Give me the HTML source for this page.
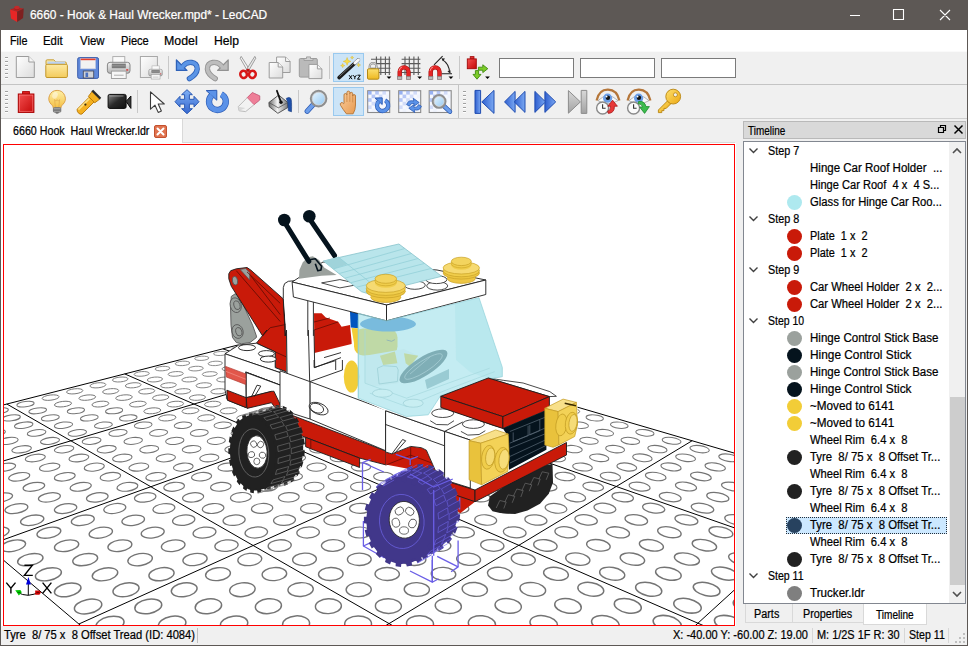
<!DOCTYPE html>
<html><head><meta charset="utf-8"><title>6660 - Hook &amp; Haul Wrecker.mpd* - LeoCAD</title>
<style>
html,body{margin:0;padding:0;background:#f0f0f0;overflow:hidden}
#win{position:relative;width:968px;height:646px;background:#f0f0f0;overflow:hidden;font:12px "Liberation Sans", sans-serif;}
.abs{position:absolute}
.t{position:absolute;white-space:pre;-webkit-text-stroke:0.22px currentColor;line-height:14px;height:14px;transform-origin:0 50%;font:12px/14px "Liberation Sans", sans-serif}
.dot{width:15px;height:15px;border-radius:50%}
.sel{background:#cce8ff;box-sizing:border-box;border:1px dotted #26303a}
.vline{position:absolute;width:1px;background:#c8c8c8}
.inp{position:absolute;box-sizing:border-box;background:#fff;border:1px solid #7a7a7a;top:58px;height:20px;width:75px}
.hl{position:absolute;box-sizing:border-box;background:#cce4f7;border:1px solid #99c9ef;width:31px;height:29px}
.grip{position:absolute;width:3px;height:24px;background:repeating-linear-gradient(#f0f0f0 0 1px,#a0a0a0 1px 2px,#fff 2px 3px,#f0f0f0 3px 4px)}
</style></head><body>
<div id="win">
<!-- title bar -->
<div class="abs" style="left:0;top:0;width:968px;height:30px;background:#5d5855"></div>
<!-- menu bar -->
<div class="abs" style="left:1px;top:30px;width:966px;height:21px;background:#fff"></div>
<!-- toolbars -->
<div class="abs" style="left:1px;top:51px;width:966px;height:1px;background:#fafafa"></div>
<div class="abs" style="left:1px;top:84px;width:966px;height:1px;background:#c4c4c4"></div>
<div class="abs" style="left:1px;top:118px;width:966px;height:1px;background:#d0d0d0"></div>
<div class="abs" style="left:458px;top:85px;width:1px;height:33px;background:#c4c4c4"></div>
<div class="grip" style="left:5px;top:56px"></div><div class="grip" style="left:5px;top:90px"></div><div class="grip" style="left:463px;top:90px"></div>
<div class="vline" style="left:168px;top:56px;height:23px"></div><div class="vline" style="left:329px;top:56px;height:23px"></div><div class="vline" style="left:459px;top:56px;height:23px"></div>
<div class="vline" style="left:137px;top:90px;height:23px"></div><div class="vline" style="left:298px;top:90px;height:23px"></div>
<div class="hl" style="left:333px;top:53px"></div><div class="hl" style="left:333px;top:87px"></div>
<div class="inp" style="left:499px"></div><div class="inp" style="left:580px"></div><div class="inp" style="left:661px"></div>
<svg class="abs" style="left:0;top:52px" width="968" height="66" viewBox="0 52 968 66"><defs>
<linearGradient id="gPage" x1="0" y1="0" x2="1" y2="1"><stop offset="0" stop-color="#ffffff"/><stop offset="1" stop-color="#dcdcdc"/></linearGradient>
<linearGradient id="gFold" x1="0" y1="0" x2="0" y2="1"><stop offset="0" stop-color="#fdeaa5"/><stop offset="1" stop-color="#f3cb5c"/></linearGradient>
<linearGradient id="gPrn" x1="0" y1="0" x2="0" y2="1"><stop offset="0" stop-color="#f2f2f2"/><stop offset="1" stop-color="#b4b4b4"/></linearGradient>
<linearGradient id="gBlue" x1="0" y1="0" x2="0" y2="1"><stop offset="0" stop-color="#7fb0f5"/><stop offset="1" stop-color="#3667cf"/></linearGradient>
<linearGradient id="gBlueH" x1="0" y1="0" x2="1" y2="0"><stop offset="0" stop-color="#2f5fd0"/><stop offset="1" stop-color="#7aa8f2"/></linearGradient>
<linearGradient id="gGray" x1="0" y1="0" x2="0" y2="1"><stop offset="0" stop-color="#d8d8d8"/><stop offset="1" stop-color="#a2a2a2"/></linearGradient>
<linearGradient id="gRed" x1="0" y1="0" x2="1" y2="1"><stop offset="0" stop-color="#f45050"/><stop offset="1" stop-color="#c40808"/></linearGradient>
<linearGradient id="gLock" x1="0" y1="0" x2="0" y2="1"><stop offset="0" stop-color="#fbe070"/><stop offset="1" stop-color="#eeb820"/></linearGradient>
<linearGradient id="gGlass" x1="0" y1="0" x2="1" y2="1"><stop offset="0" stop-color="#eef8ff"/><stop offset="1" stop-color="#8fc6f2"/></linearGradient>
<linearGradient id="gBucket" x1="0" y1="0" x2="1" y2="0"><stop offset="0" stop-color="#6a6a6a"/><stop offset="0.45" stop-color="#f4f4f4"/><stop offset="1" stop-color="#7a7a7a"/></linearGradient>
<linearGradient id="gCam" x1="0" y1="0" x2="1" y2="1"><stop offset="0" stop-color="#8a8a8a"/><stop offset="0.5" stop-color="#2a2a2a"/><stop offset="1" stop-color="#101010"/></linearGradient>
<linearGradient id="gBulb" x1="0" y1="0" x2="0" y2="1"><stop offset="0" stop-color="#fdf0a8"/><stop offset="1" stop-color="#f6c044"/></linearGradient>
<linearGradient id="gGold" x1="0" y1="0" x2="1" y2="1"><stop offset="0" stop-color="#fde070"/><stop offset="1" stop-color="#eda810"/></linearGradient>
<linearGradient id="gSkin" x1="0" y1="0" x2="1" y2="1"><stop offset="0" stop-color="#fbd0a0"/><stop offset="1" stop-color="#e89a50"/></linearGradient>
<linearGradient id="gChk" x1="0" y1="0" x2="1" y2="1"><stop offset="0" stop-color="#9db8f5"/><stop offset="1" stop-color="#e8eefc"/></linearGradient>
</defs>
<g transform="translate(13.3 55.0)"><path d="M3 1.5h12.5l5.5 5.5v15.5h-18z" stroke="#9c9c9c" stroke-width="1" fill="url(#gPage)"/><path d="M15.5 1.5v5.5h5.5" fill="#f6f6f6" stroke="#9c9c9c" stroke-width="1"/></g>
<g transform="translate(44.5 55.0)"><path d="M1.5 9.5V6q0-1.2 1.2-1.2h6.6l2 2.2h9.4q1.2 0 1.2 1.2v1.3z" fill="#f4e3a0" stroke="#c9a23c"/><rect x="3" y="6.6" width="17.5" height="3" fill="#bcd3f2"/><rect x="1.3" y="9.3" width="21.6" height="13.2" rx="1.2" fill="url(#gFold)" stroke="#c2962a"/></g>
<g transform="translate(76.1 55.0)"><rect x="1.6" y="2.6" width="20.8" height="20.8" rx="1.6" fill="#5f88da" stroke="#3c5fae"/><rect x="4.6" y="3.6" width="14.8" height="10.2" fill="#f2f2f2" stroke="#c8cde0" stroke-width=".6"/><rect x="4.6" y="3.6" width="14.8" height="1.6" fill="#e8402c"/><rect x="7.2" y="16" width="10.4" height="7" fill="#cfd2d8" stroke="#4a4f66" stroke-width=".9"/><rect x="9.4" y="17.6" width="2.6" height="4.4" fill="#4a70c0"/></g>
<g transform="translate(106.7 55.0)"><g transform="translate(0.1 1.1) scale(1.0)"><rect x="6" y="0.5" width="12" height="7" fill="#fafafa" stroke="#a8a8a8" stroke-width=".9"/><rect x="0.6" y="6.2" width="22.6" height="11" rx="2.6" fill="url(#gPrn)" stroke="#7c7c7c" stroke-width=".9"/><rect x="5" y="7.5" width="14" height="4.6" fill="#7a7a7a"/><rect x="5" y="9.2" width="14" height="1" fill="#999"/><rect x="19.4" y="13.2" width="2" height="1.3" fill="#e02020"/><rect x="4.6" y="15" width="14.8" height="7.4" fill="#f6f6f6" stroke="#9a9a9a" stroke-width=".9"/><rect x="7.2" y="18.6" width="9.6" height="1" fill="#b0b0b0"/></g></g>
<g transform="translate(139.2 55.0)"><rect x="1.2" y="1.5" width="17" height="21" fill="url(#gPage)" stroke="#a8a8a8"/><g transform="translate(9.2 10.6) scale(0.6)"><rect x="6" y="0.5" width="12" height="7" fill="#fafafa" stroke="#a8a8a8" stroke-width=".9"/><rect x="0.6" y="6.2" width="22.6" height="11" rx="2.6" fill="url(#gPrn)" stroke="#7c7c7c" stroke-width=".9"/><rect x="5" y="7.5" width="14" height="4.6" fill="#7a7a7a"/><rect x="5" y="9.2" width="14" height="1" fill="#999"/><rect x="19.4" y="13.2" width="2" height="1.3" fill="#e02020"/><rect x="4.6" y="15" width="14.8" height="7.4" fill="#f6f6f6" stroke="#9a9a9a" stroke-width=".9"/><rect x="7.2" y="18.6" width="9.6" height="1" fill="#b0b0b0"/></g></g>
<g transform="translate(175.2 56.0)"><g ><path d="M7.5 10.5C12 4.5 22.5 5 22 13C21.6 17.6 17 21 14.2 22.6" fill="none" stroke="#2f62b8" stroke-width="5.4" stroke-linecap="round"/><path d="M1.2 3.8V14.4H11.8z" fill="#2f62b8" stroke="#2f62b8" stroke-width="1.2" stroke-linejoin="round"/><path d="M7.5 10.5C12 4.5 22.5 5 22 13C21.6 17.6 17 21 14.2 22.6" fill="none" stroke="#5b95e6" stroke-width="3.6" stroke-linecap="round"/><path d="M1.9 5.6V13.7H10z" fill="#5b95e6"/></g></g>
<g transform="translate(205.4 56.0)"><g transform="translate(24 0) scale(-1 1)"><path d="M7.5 10.5C12 4.5 22.5 5 22 13C21.6 17.6 17 21 14.2 22.6" fill="none" stroke="#929292" stroke-width="5.4" stroke-linecap="round"/><path d="M1.2 3.8V14.4H11.8z" fill="#929292" stroke="#929292" stroke-width="1.2" stroke-linejoin="round"/><path d="M7.5 10.5C12 4.5 22.5 5 22 13C21.6 17.6 17 21 14.2 22.6" fill="none" stroke="#bdbdbd" stroke-width="3.6" stroke-linecap="round"/><path d="M1.9 5.6V13.7H10z" fill="#bdbdbd"/></g></g>
<g transform="translate(236.0 55.0)"><path d="M5.2 1.4L14.6 16.2L12.3 17.3L4.2 3.2z" fill="#f4f4f4" stroke="#8a8a8a" stroke-width=".8"/><path d="M18.8 1.4L9.4 16.2L11.7 17.3L19.8 3.2z" fill="#e8e8e8" stroke="#8a8a8a" stroke-width=".8"/><ellipse cx="7.6" cy="19.4" rx="3.3" ry="3.6" fill="none" stroke="#d81818" stroke-width="2.5" transform="rotate(-20 7.6 19.4)"/><ellipse cx="16.4" cy="19.4" rx="3.3" ry="3.6" fill="none" stroke="#d81818" stroke-width="2.5" transform="rotate(20 16.4 19.4)"/><path d="M9.8 15l2.2 -1.5l2.2 1.5l-2.2 2.2z" fill="#c01010"/></g>
<g transform="translate(267.6 55.0)"><path d="M9 2h9.0l4.5 4.5v11.0h-13.5z" stroke="#9c9c9c" stroke-width="1" fill="url(#gPage)"/><path d="M18.0 2v4.5h4.5" fill="#f6f6f6" stroke="#9c9c9c" stroke-width="1"/><path d="M1.6 7.5h9.0l4.5 4.5v11.0h-13.5z" stroke="#9c9c9c" stroke-width="1" fill="url(#gPage)"/><path d="M10.6 7.5v4.5h4.5" fill="#f6f6f6" stroke="#9c9c9c" stroke-width="1"/></g>
<g transform="translate(298.5 55.0)"><rect x="0.8" y="3.5" width="18" height="18.6" rx="1.2" fill="#bababa" stroke="#9c9c9c"/><path d="M5.5 5.5v-2h2.5v-1.6h4v1.6h2.5v2z" fill="#d0d0d0" stroke="#9c9c9c" stroke-width=".9"/><path d="M10.4 9.4h8.5l4.5 4.5v9.7h-13z" stroke="#9c9c9c" stroke-width="1" fill="url(#gPage)"/><path d="M18.9 9.4v4.5h4.5" fill="#f6f6f6" stroke="#9c9c9c" stroke-width="1"/></g>
<g transform="translate(336.5 55.0)"><path d="M2.6 22.6L21.8 5" stroke="#1a1a1a" stroke-width="3.6" stroke-linecap="round"/><path d="M3.2 21.2L20.4 5.4" stroke="#6a6a6a" stroke-width="1" stroke-linecap="round"/><path d="M18.6 7.9L21.9 4.9" stroke="#f8f8f8" stroke-width="3.2" stroke-linecap="round"/><path d="M10.6 2.5000000000000004L11.692 5.308L14.5 6.4L11.692 7.492000000000001L10.6 10.3L9.508 7.492000000000001L6.699999999999999 6.4L9.508 5.308z" fill="#f7dc4a" stroke="#d9b020" stroke-width=".4"/><path d="M6.2 8.5L6.788 10.012L8.3 10.6L6.788 11.187999999999999L6.2 12.7L5.612 11.187999999999999L4.1 10.6L5.612 10.012z" fill="#f7dc4a" stroke="#d9b020" stroke-width=".4"/><path d="M22.2 8.1L22.732 9.468L24.099999999999998 10L22.732 10.532L22.2 11.9L21.668 10.532L20.3 10L21.668 9.468z" fill="#f7dc4a" stroke="#d9b020" stroke-width=".4"/><path d="M15.6 1.0L16.048 2.152L17.2 2.6L16.048 3.048L15.6 4.2L15.152 3.048L14.0 2.6L15.152 2.152z" fill="#f7dc4a" stroke="#d9b020" stroke-width=".4"/><path d="M12.6 20.2l3 4m0-4l-3 4M16.7 20.2l1.6 2l1.6-2m-1.6 2v2M21 20.2h2.8l-2.8 4h2.8" fill="none" stroke="#000" stroke-width="1"/></g>
<g transform="translate(367.0 55.0)"><path d="M9.4 1.6V20M13.8 1.6V20M18.4 1.6V20M22.3 1.6V20M4 4.2H23.4M4 8.6H23.4M4 13.2H23.4M4 17.5H23.4" stroke="#5a5a5a" stroke-width="1.1" fill="none"/><path d="M2.7 14.2V11.4a3.4 3.4 0 0 1 6.8 0V14.2" fill="none" stroke="#8a8a8a" stroke-width="2.2"/><path d="M2.7 14.2V11.4a3.4 3.4 0 0 1 6.8 0V14.2" fill="none" stroke="#e6e6e6" stroke-width=".8"/><rect x="0.5" y="13.8" width="11.4" height="10.4" rx="1.2" fill="url(#gLock)" stroke="#b48a14"/><path d="M19.6 21.4h4.8l-2.4 2.7z" fill="#000"/></g>
<g transform="translate(398.0 55.0)"><path d="M7 1.6V20M11.3 1.6V20M15.9 1.6V20M20.3 1.6V20M3.6 4.2H22.4M3.6 8.6H22.4M3.6 13.2H22.4M3.6 17.5H22.4" stroke="#5a5a5a" stroke-width="1.1" fill="none"/><path d="M1.7 24.2V16.8a4.4 4.4 0 0 1 8.8 0V24.2" fill="none" stroke="#a01010" stroke-width="4.4"/><path d="M1.7 24.2V16.8a4.4 4.4 0 0 1 8.8 0V24.2" fill="none" stroke="#e42424" stroke-width="3.2"/><path d="M1.1 15.8a5 5 0 0 1 3 -4" fill="none" stroke="#f9a0a0" stroke-width="1"/><rect x="-0.5" y="21.4" width="4.4" height="3" fill="#b8b8b8" stroke="#808080" stroke-width=".6"/><rect x="8.3" y="21.4" width="4.4" height="3" fill="#b8b8b8" stroke="#808080" stroke-width=".6"/><path d="M19.3 21.4h4.8l-2.4 2.7z" fill="#000"/></g>
<g transform="translate(429.0 55.0)"><path d="M5 9.8L13.6 1.2M12.6 18.8H23" stroke="#222" stroke-width="1.1" fill="none"/><path d="M13.4 4.6A15 15 0 0 1 20.4 17.6" stroke="#222" stroke-width="1.1" fill="none"/><path d="M12.4 3.2l3.6 .4l-2 2.6zM21.6 18.6l-3.2-2l3-1.4z" fill="#222"/><path d="M1.7 24.2V16.8a4.4 4.4 0 0 1 8.8 0V24.2" fill="none" stroke="#a01010" stroke-width="4.4"/><path d="M1.7 24.2V16.8a4.4 4.4 0 0 1 8.8 0V24.2" fill="none" stroke="#e42424" stroke-width="3.2"/><path d="M1.1 15.8a5 5 0 0 1 3 -4" fill="none" stroke="#f9a0a0" stroke-width="1"/><rect x="-0.5" y="21.4" width="4.4" height="3" fill="#b8b8b8" stroke="#808080" stroke-width=".6"/><rect x="8.3" y="21.4" width="4.4" height="3" fill="#b8b8b8" stroke="#808080" stroke-width=".6"/><path d="M19.5 21.4h4.8l-2.4 2.7z" fill="#000"/></g>
<g transform="translate(466.0 55.0)"><rect x="4.2" y="1.6" width="3.8" height="2.6" fill="#e03030" stroke="#a00808" stroke-width=".8"/><rect x="1.3" y="3.9" width="9" height="9.8" fill="url(#gRed)" stroke="#a00808" stroke-width=".9"/><path d="M12.4 12.2h4.4v-2.4l5 3.9l-5 3.9v-2.4h-4.4z" fill="#7ccc28" stroke="#3f8a10" stroke-width=".9" stroke-linejoin="round"/><path d="M9.4 15.6h3.2v3.8h2.4l-4 4.8l-4-4.8h2.4z" fill="#7ccc28" stroke="#3f8a10" stroke-width=".9" stroke-linejoin="round"/><path d="M19.1 21.4h4.8l-2.4 2.7z" fill="#000"/></g>
<g transform="translate(14.0 90.0)"><rect x="8.6" y="1.6" width="6.8" height="2.8" fill="#e02020" stroke="#a80000" stroke-width=".9"/><rect x="4.3" y="4" width="15.6" height="18.4" fill="url(#gRed)" stroke="#a80000" stroke-width="1"/><rect x="5.4" y="5.1" width="13.4" height="16.2" fill="none" stroke="#ff8a8a" stroke-width=".7" stroke-opacity=".8"/></g>
<g transform="translate(45.0 90.0)"><path d="M12.1 0.4a8.2 8.2 0 0 1 5.6 14.2c-1.2 1.2-1.6 2-1.6 3.2h-8c0-1.2-.4-2-1.6-3.2A8.2 8.2 0 0 1 12.1 0.4z" fill="url(#gBulb)" stroke="#d99a3c" stroke-width=".9"/><path d="M10.4 17.2L9.6 9.6l1.3 1.6l1.2-1.6l1.2 1.6l1.3-1.6L13.8 17.2" fill="none" stroke="#e2aa4a" stroke-width=".7"/><ellipse cx="10" cy="5.4" rx="2.6" ry="3.4" fill="#fff" fill-opacity=".45" transform="rotate(25 10 5.4)"/><rect x="8.4" y="17.6" width="7.4" height="4.6" rx="1" fill="#b9b9b9" stroke="#6c6c6c" stroke-width=".8"/><path d="M8.6 19.2h7M8.6 20.7h7" stroke="#5a5a5a" stroke-width=".8"/><path d="M10.2 22.4h3.8l-.8 1.2h-2.2z" fill="#444"/></g>
<g transform="translate(76.0 90.0)"><path d="M1.2 19.2L13.2 7.2L18 12L6 24q-1.6 .8-3.4-.8q-2-2-1.4-4z" fill="#f4b020" stroke="#b87808" stroke-width=".9"/><path d="M2.4 19.6L13.4 8.6" stroke="#fde080" stroke-width="1.6"/><path d="M12.4 6.4L16 1.6L23.6 9.2L18.8 12.8z" fill="#f4b020" stroke="#b87808" stroke-width=".9"/><path d="M15.4 1.2l1.8-1.4l8 8l-1.4 1.8z" fill="#2a2a2a"/><circle cx="9.4" cy="14.6" r="1.1" fill="#3a2a08"/></g>
<g transform="translate(107.5 90.0)"><rect x="0.6" y="4.4" width="18" height="14" rx="1.6" fill="url(#gCam)" stroke="#0a0a0a" stroke-width="1"/><path d="M18.6 11.4L23.4 6v12.4z" fill="#3a3a3a" stroke="#0a0a0a" stroke-width="1" stroke-linejoin="round"/><path d="M2 6h14" stroke="#bdbdbd" stroke-width="1" stroke-opacity=".6"/></g>
<g transform="translate(145.0 90.0)"><path d="M5.5 1.8V19.2L10 15.2L13.2 22.4L16.4 21L13.2 14H19.3z" fill="#fff" stroke="#3c3c3c" stroke-width="1.1" stroke-linejoin="round"/></g>
<g transform="translate(175.0 89.7)"><path d="M12 0l5.4 5h-3v4.6h4.6v-3l5 5.4l-5 5.4v-3h-4.6v4.6h3l-5.4 5l-5.4-5h3v-4.6h-4.6v3l-5-5.4l5-5.4v3h4.6v-4.6h-3z" fill="url(#gBlue)" stroke="#2b5ab4" stroke-width="1" stroke-linejoin="round"/></g>
<g transform="translate(205.0 90.0)"><path d="M16.34 4.18A8.4 8.4 0 1 1 6.78 5.36" fill="none" stroke="#2b5ab4" stroke-width="6.3"/><path d="M1.20 0.60L11.80 0.30L11.80 10.20z" fill="#5b92e8" stroke="#2b5ab4" stroke-width="1" stroke-linejoin="round"/><path d="M16.34 4.18A8.4 8.4 0 1 1 6.78 5.36" fill="none" stroke="#5b92e8" stroke-width="5.0"/></g>
<g transform="translate(237.0 90.0)"><path d="M1.2 16.7L15.3 2.6L22.7 5.9V10L8.7 21.6L2.1 20.8z" fill="#f2f2f2" stroke="#b4b4b4" stroke-width=".9" stroke-linejoin="round"/><path d="M10.3 7.6L15.3 2.6L22.7 5.9V10L17 14.6z" fill="#ee7f98" stroke="#d05878" stroke-width=".8" stroke-linejoin="round"/><path d="M2.1 20.8L1.2 16.7L8.4 18z" fill="#d8d8d8"/></g>
<g transform="translate(268.3 90.0)"><path d="M0.6 12.5L10.4 5.1L19.5 12.5V17.5L9.6 23.3L0.9 16.7z" fill="url(#gBucket)" stroke="#4a4a4a" stroke-width=".9" stroke-linejoin="round"/><path d="M0.6 12.5L10 17.8L19.5 12.5" fill="none" stroke="#555" stroke-width=".8"/><path d="M17.9 8.4Q21 6.4 22.6 8.4Q23.6 10 23.2 21.8L20 20.8L19.5 12.5z" fill="#1f4fa8" stroke="#163a80" stroke-width=".6"/><path d="M8.6 0.8L12.6 12" stroke="#111" stroke-width="1.8" stroke-linecap="round"/><circle cx="12.7" cy="12.2" r="1.7" fill="#111"/></g>
<g transform="translate(305.0 90.0)"><path d="M8.5 14.2L2.2 21.2" stroke="#2b5ab4" stroke-width="5.199999999999999" stroke-linecap="round"/><path d="M8.5 14.2L2.2 21.2" stroke="#6d9eea" stroke-width="3.8" stroke-linecap="round"/><circle cx="13.6" cy="8.6" r="7.6" fill="url(#gGlass)" stroke="#8e8e8e" stroke-width="2.4"/><circle cx="13.6" cy="8.6" r="6.3999999999999995" fill="none" stroke="#d8d8d8" stroke-width=".8"/></g>
<g transform="translate(337.0 90.0)"><path d="M7 13.4V5q0-1.5 1.45-1.5T9.9 5V2.6q0-1.5 1.45-1.5t1.45 1.5V3.8q0-1.5 1.45-1.5t1.45 1.5V6q0-1.4 1.4-1.4t1.4 1.4V15q0 5-2.4 8.8H9.4Q6 19.4 3.6 15.4q-1-1.8.4-2.6t2.6.8z" fill="url(#gSkin)" stroke="#b47434" stroke-width=".9" stroke-linejoin="round"/><path d="M9.9 5v7M12.8 3.8v8M15.7 6v6.4" stroke="#c98848" stroke-width=".8"/></g>
<g transform="translate(367.0 90.0)"><rect x="0.7" y="0.7" width="22" height="21.8" fill="#f6f8fe" stroke="#8a8a8a" stroke-width="1.1"/><rect x="1.0" y="1.0" width="3.6" height="3.6" fill="#8ea8f0" fill-opacity="0.90"/><rect x="1.0" y="8.2" width="3.6" height="3.6" fill="#8ea8f0" fill-opacity="0.62"/><rect x="1.0" y="15.4" width="3.6" height="3.6" fill="#8ea8f0" fill-opacity="0.34"/><rect x="4.6" y="4.6" width="3.6" height="3.6" fill="#8ea8f0" fill-opacity="0.62"/><rect x="4.6" y="11.8" width="3.6" height="3.6" fill="#8ea8f0" fill-opacity="0.34"/><rect x="4.6" y="19.0" width="3.6" height="3.6" fill="#8ea8f0" fill-opacity="0.06"/><rect x="8.2" y="1.0" width="3.6" height="3.6" fill="#8ea8f0" fill-opacity="0.62"/><rect x="8.2" y="8.2" width="3.6" height="3.6" fill="#8ea8f0" fill-opacity="0.34"/><rect x="8.2" y="15.4" width="3.6" height="3.6" fill="#8ea8f0" fill-opacity="0.06"/><rect x="11.8" y="4.6" width="3.6" height="3.6" fill="#8ea8f0" fill-opacity="0.34"/><rect x="11.8" y="11.8" width="3.6" height="3.6" fill="#8ea8f0" fill-opacity="0.06"/><rect x="11.8" y="19.0" width="3.6" height="3.6" fill="#8ea8f0" fill-opacity="0.00"/><rect x="15.4" y="1.0" width="3.6" height="3.6" fill="#8ea8f0" fill-opacity="0.34"/><rect x="15.4" y="8.2" width="3.6" height="3.6" fill="#8ea8f0" fill-opacity="0.06"/><rect x="15.4" y="15.4" width="3.6" height="3.6" fill="#8ea8f0" fill-opacity="0.00"/><rect x="19.0" y="4.6" width="3.6" height="3.6" fill="#8ea8f0" fill-opacity="0.06"/><rect x="19.0" y="11.8" width="3.6" height="3.6" fill="#8ea8f0" fill-opacity="0.00"/><rect x="19.0" y="19.0" width="3.6" height="3.6" fill="#8ea8f0" fill-opacity="0.00"/><path d="M18.23 10.46A5.6 5.6 0 1 1 11.85 11.24" fill="none" stroke="#2b5ab4" stroke-width="4.3"/><path d="M8.13 8.07L15.20 7.87L15.20 14.47z" fill="#5b92e8" stroke="#2b5ab4" stroke-width="1" stroke-linejoin="round"/><path d="M18.23 10.46A5.6 5.6 0 1 1 11.85 11.24" fill="none" stroke="#5b92e8" stroke-width="3.0"/></g>
<g transform="translate(398.0 90.0)"><rect x="0.7" y="0.7" width="22" height="21.8" fill="#f6f8fe" stroke="#8a8a8a" stroke-width="1.1"/><rect x="1.0" y="1.0" width="3.6" height="3.6" fill="#8ea8f0" fill-opacity="0.90"/><rect x="1.0" y="8.2" width="3.6" height="3.6" fill="#8ea8f0" fill-opacity="0.62"/><rect x="1.0" y="15.4" width="3.6" height="3.6" fill="#8ea8f0" fill-opacity="0.34"/><rect x="4.6" y="4.6" width="3.6" height="3.6" fill="#8ea8f0" fill-opacity="0.62"/><rect x="4.6" y="11.8" width="3.6" height="3.6" fill="#8ea8f0" fill-opacity="0.34"/><rect x="4.6" y="19.0" width="3.6" height="3.6" fill="#8ea8f0" fill-opacity="0.06"/><rect x="8.2" y="1.0" width="3.6" height="3.6" fill="#8ea8f0" fill-opacity="0.62"/><rect x="8.2" y="8.2" width="3.6" height="3.6" fill="#8ea8f0" fill-opacity="0.34"/><rect x="8.2" y="15.4" width="3.6" height="3.6" fill="#8ea8f0" fill-opacity="0.06"/><rect x="11.8" y="4.6" width="3.6" height="3.6" fill="#8ea8f0" fill-opacity="0.34"/><rect x="11.8" y="11.8" width="3.6" height="3.6" fill="#8ea8f0" fill-opacity="0.06"/><rect x="11.8" y="19.0" width="3.6" height="3.6" fill="#8ea8f0" fill-opacity="0.00"/><rect x="15.4" y="1.0" width="3.6" height="3.6" fill="#8ea8f0" fill-opacity="0.34"/><rect x="15.4" y="8.2" width="3.6" height="3.6" fill="#8ea8f0" fill-opacity="0.06"/><rect x="15.4" y="15.4" width="3.6" height="3.6" fill="#8ea8f0" fill-opacity="0.00"/><rect x="19.0" y="4.6" width="3.6" height="3.6" fill="#8ea8f0" fill-opacity="0.06"/><rect x="19.0" y="11.8" width="3.6" height="3.6" fill="#8ea8f0" fill-opacity="0.00"/><rect x="19.0" y="19.0" width="3.6" height="3.6" fill="#8ea8f0" fill-opacity="0.00"/><path d="M8.6 14.6q1.6-5 7.2-3.6l-.6-2.8l6 4.4l-5 3.4l-.2-2.6q-3.4-.6-4.6 2.8z" fill="#5b92e8" stroke="#2b5ab4" stroke-width=".8" stroke-linejoin="round"/><path d="M23.4 16.2q-1.6 5-7.2 3.6l.6 2.8l-6-4.4l5-3.4l.2 2.6q3.4.6 4.6-2.8z" fill="#5b92e8" stroke="#2b5ab4" stroke-width=".8" stroke-linejoin="round"/></g>
<g transform="translate(428.5 90.0)"><rect x="0.7" y="0.7" width="22" height="21.8" fill="#f6f8fe" stroke="#8a8a8a" stroke-width="1.1"/><rect x="1.0" y="1.0" width="3.6" height="3.6" fill="#8ea8f0" fill-opacity="0.90"/><rect x="1.0" y="8.2" width="3.6" height="3.6" fill="#8ea8f0" fill-opacity="0.62"/><rect x="1.0" y="15.4" width="3.6" height="3.6" fill="#8ea8f0" fill-opacity="0.34"/><rect x="4.6" y="4.6" width="3.6" height="3.6" fill="#8ea8f0" fill-opacity="0.62"/><rect x="4.6" y="11.8" width="3.6" height="3.6" fill="#8ea8f0" fill-opacity="0.34"/><rect x="4.6" y="19.0" width="3.6" height="3.6" fill="#8ea8f0" fill-opacity="0.06"/><rect x="8.2" y="1.0" width="3.6" height="3.6" fill="#8ea8f0" fill-opacity="0.62"/><rect x="8.2" y="8.2" width="3.6" height="3.6" fill="#8ea8f0" fill-opacity="0.34"/><rect x="8.2" y="15.4" width="3.6" height="3.6" fill="#8ea8f0" fill-opacity="0.06"/><rect x="11.8" y="4.6" width="3.6" height="3.6" fill="#8ea8f0" fill-opacity="0.34"/><rect x="11.8" y="11.8" width="3.6" height="3.6" fill="#8ea8f0" fill-opacity="0.06"/><rect x="11.8" y="19.0" width="3.6" height="3.6" fill="#8ea8f0" fill-opacity="0.00"/><rect x="15.4" y="1.0" width="3.6" height="3.6" fill="#8ea8f0" fill-opacity="0.34"/><rect x="15.4" y="8.2" width="3.6" height="3.6" fill="#8ea8f0" fill-opacity="0.06"/><rect x="15.4" y="15.4" width="3.6" height="3.6" fill="#8ea8f0" fill-opacity="0.00"/><rect x="19.0" y="4.6" width="3.6" height="3.6" fill="#8ea8f0" fill-opacity="0.06"/><rect x="19.0" y="11.8" width="3.6" height="3.6" fill="#8ea8f0" fill-opacity="0.00"/><rect x="19.0" y="19.0" width="3.6" height="3.6" fill="#8ea8f0" fill-opacity="0.00"/><path d="M15.1 15.7L21.4 21.6" stroke="#2b5ab4" stroke-width="4.6" stroke-linecap="round"/><path d="M15.1 15.7L21.4 21.6" stroke="#6d9eea" stroke-width="3.2" stroke-linecap="round"/><circle cx="10.6" cy="11.4" r="6.2" fill="url(#gGlass)" stroke="#8e8e8e" stroke-width="2.4"/><circle cx="10.6" cy="11.4" r="5.0" fill="none" stroke="#d8d8d8" stroke-width=".8"/></g>
<g transform="translate(472.6 90.0)"><rect x="2.4" y="0.4" width="5.6" height="23" fill="url(#gBlueH)" stroke="#1f4cb0" stroke-width="1" stroke-linejoin="round"/><path d="M21.4 0.4v23L9.2 11.9z" fill="url(#gBlueH)" stroke="#1f4cb0" stroke-width="1" stroke-linejoin="round"/></g>
<g transform="translate(502.7 90.0)"><path d="M12.4 1.4v21L1.8 11.9z" fill="url(#gBlueH)" stroke="#1f4cb0" stroke-width="1" stroke-linejoin="round"/><path d="M22.3 1.4v21L11.6 11.9z" fill="url(#gBlueH)" stroke="#1f4cb0" stroke-width="1" stroke-linejoin="round"/></g>
<g transform="translate(533.5 90.0)"><path d="M11.4 1.4v21L22.2 11.9z" fill="url(#gBlueH)" stroke="#1f4cb0" stroke-width="1" stroke-linejoin="round"/><path d="M1.4 1.4v21L12 11.9z" fill="url(#gBlueH)" stroke="#1f4cb0" stroke-width="1" stroke-linejoin="round"/></g>
<g transform="translate(565.0 90.0)"><path d="M3.4 0.6v22.6L15.4 11.9z" fill="url(#gGray)" stroke="#8c8c8c" stroke-width="1" stroke-linejoin="round"/><rect x="16.2" y="0.4" width="5.6" height="23" fill="url(#gGray)" stroke="#8c8c8c" stroke-width="1" stroke-linejoin="round"/></g>
<g transform="translate(596.0 90.0)"><path d="M0.6 10.4Q3 -0.6 12 -0.4T23.4 10.4" fill="none" stroke="#b5763a" stroke-width="2.2"/><path d="M2 10.6Q11.8 1 22 10.6Q11.8 17 2 10.6z" fill="#fafafa" stroke="#9a9a9a" stroke-width=".7"/><circle cx="11.6" cy="8.2" r="4.6" fill="#6c9ee6"/><circle cx="11.9" cy="7.8" r="2.2" fill="#111"/><circle cx="10.6" cy="6.6" r=".9" fill="#fff"/><circle cx="6.6" cy="18" r="6" fill="#fbfbfb" stroke="#8a8a8a" stroke-width="1.4"/><path d="M6.6 14.2V18.2H9.6" fill="none" stroke="#333" stroke-width="1.1"/><path d="M12.4 23.4Q18.6 23 18.4 16.2H21.4L16.6 10.2L11.8 16.2H14.6Q14.8 20.6 11.6 21.4z" fill="#e83838" stroke="#a81414" stroke-width=".8" stroke-linejoin="round"/></g>
<g transform="translate(627.0 90.0)"><path d="M0.6 10.4Q3 -0.6 12 -0.4T23.4 10.4" fill="none" stroke="#b5763a" stroke-width="2.2"/><path d="M2 10.6Q11.8 1 22 10.6Q11.8 17 2 10.6z" fill="#fafafa" stroke="#9a9a9a" stroke-width=".7"/><circle cx="11.6" cy="8.2" r="4.6" fill="#6c9ee6"/><circle cx="11.9" cy="7.8" r="2.2" fill="#111"/><circle cx="10.6" cy="6.6" r=".9" fill="#fff"/><circle cx="6.6" cy="18" r="6" fill="#fbfbfb" stroke="#8a8a8a" stroke-width="1.4"/><path d="M6.6 14.2V18.2H9.6" fill="none" stroke="#333" stroke-width="1.1"/><path d="M11.6 11.4Q17.6 10.6 19 16.6H22.4L17.6 23.4L12.6 17H15.6Q14.8 13.6 11.2 13.8z" fill="#3cbc4c" stroke="#1c8a2c" stroke-width=".8" stroke-linejoin="round"/></g>
<g transform="translate(657.6 90.0)"><path d="M11.2 9.6L0.8 20v2.6h3.4v-2h2.2v-2.2h2.2l5-5z" fill="url(#gGold)" stroke="#b88410" stroke-width=".9" stroke-linejoin="round"/><circle cx="15.6" cy="6.6" r="7.4" fill="url(#gGold)" stroke="#b88410" stroke-width=".9"/><circle cx="17.8" cy="4.8" r="2" fill="#f0f0f0" stroke="#b88410" stroke-width=".8"/></g></svg>
<!-- central tab + viewport -->
<div class="abs" style="left:1px;top:119px;width:181px;height:25px;background:#fff"></div>
<div class="abs" style="left:182px;top:119px;width:553px;height:24px;background:#f0f0f0;border-left:1px solid #d9d9d9;border-bottom:1px solid #d9d9d9;box-sizing:border-box"></div>
<div class="abs" style="left:1px;top:143px;width:735px;height:483px;background:#fff"></div>
<div class="abs" style="left:154px;top:125px;width:13px;height:13px;box-sizing:border-box;background:#e0734f;border:1px solid #c3512f;border-radius:2px"></div>
<svg class="abs" style="left:154px;top:125px" width="13" height="13" viewBox="0 0 13 13"><path d="M3.5 3.5L9.5 9.5M9.5 3.5L3.5 9.5" stroke="#fff" stroke-width="2" stroke-linecap="round"/></svg>
<svg class="abs" style="left:4px;top:145px" width="730" height="480" viewBox="4 145 730 480">
<g fill="#fff" stroke="#747474"><ellipse cx="-18.3" cy="520.4" rx="12.1" ry="4.8" stroke-width="1.34" transform="rotate(-11.3 -18.3 520.4)"/><ellipse cx="-3.0" cy="532.7" rx="12.3" ry="5.1" stroke-width="1.37" transform="rotate(-11.5 -3.0 532.7)"/><ellipse cx="13.2" cy="545.8" rx="12.6" ry="5.4" stroke-width="1.40" transform="rotate(-11.6 13.2 545.8)"/><ellipse cx="30.3" cy="559.7" rx="12.9" ry="5.7" stroke-width="1.43" transform="rotate(-11.8 30.3 559.7)"/><ellipse cx="48.4" cy="574.3" rx="13.2" ry="6.1" stroke-width="1.46" transform="rotate(-11.9 48.4 574.3)"/><ellipse cx="67.7" cy="589.9" rx="13.5" ry="6.5" stroke-width="1.50" transform="rotate(-12.0 67.7 589.9)"/><ellipse cx="88.1" cy="606.5" rx="13.9" ry="7.0" stroke-width="1.53" transform="rotate(-12.0 88.1 606.5)"/><ellipse cx="110.0" cy="624.1" rx="14.2" ry="7.5" stroke-width="1.57" transform="rotate(-12.0 110.0 624.1)"/><ellipse cx="133.3" cy="642.9" rx="14.6" ry="8.1" stroke-width="1.60" transform="rotate(-11.9 133.3 642.9)"/><ellipse cx="-12.9" cy="486.9" rx="11.1" ry="4.1" stroke-width="1.23" transform="rotate(-10.2 -12.9 486.9)"/><ellipse cx="1.4" cy="497.5" rx="11.3" ry="4.3" stroke-width="1.26" transform="rotate(-10.3 1.4 497.5)"/><ellipse cx="16.4" cy="508.6" rx="11.6" ry="4.6" stroke-width="1.28" transform="rotate(-10.3 16.4 508.6)"/><ellipse cx="32.2" cy="520.3" rx="11.8" ry="4.9" stroke-width="1.31" transform="rotate(-10.4 32.2 520.3)"/><ellipse cx="48.9" cy="532.7" rx="12.1" ry="5.2" stroke-width="1.34" transform="rotate(-10.5 48.9 532.7)"/><ellipse cx="66.6" cy="545.8" rx="12.3" ry="5.5" stroke-width="1.37" transform="rotate(-10.5 66.6 545.8)"/><ellipse cx="85.2" cy="559.6" rx="12.6" ry="5.8" stroke-width="1.40" transform="rotate(-10.5 85.2 559.6)"/><ellipse cx="105.0" cy="574.3" rx="12.9" ry="6.2" stroke-width="1.43" transform="rotate(-10.4 105.0 574.3)"/><ellipse cx="126.0" cy="589.8" rx="13.2" ry="6.7" stroke-width="1.46" transform="rotate(-10.3 126.0 589.8)"/><ellipse cx="148.3" cy="606.4" rx="13.6" ry="7.1" stroke-width="1.50" transform="rotate(-10.1 148.3 606.4)"/><ellipse cx="172.1" cy="624.0" rx="13.9" ry="7.7" stroke-width="1.54" transform="rotate(-9.8 172.1 624.0)"/><ellipse cx="197.5" cy="642.9" rx="14.3" ry="8.3" stroke-width="1.58" transform="rotate(-9.3 197.5 642.9)"/><ellipse cx="-8.2" cy="458.0" rx="10.3" ry="3.6" stroke-width="1.14" transform="rotate(-9.2 -8.2 458.0)"/><ellipse cx="5.2" cy="467.2" rx="10.5" ry="3.8" stroke-width="1.16" transform="rotate(-9.3 5.2 467.2)"/><ellipse cx="19.2" cy="476.8" rx="10.7" ry="4.0" stroke-width="1.18" transform="rotate(-9.3 19.2 476.8)"/><ellipse cx="33.9" cy="486.8" rx="10.9" ry="4.2" stroke-width="1.21" transform="rotate(-9.3 33.9 486.8)"/><ellipse cx="49.4" cy="497.4" rx="11.1" ry="4.4" stroke-width="1.23" transform="rotate(-9.4 49.4 497.4)"/><ellipse cx="65.6" cy="508.6" rx="11.3" ry="4.7" stroke-width="1.26" transform="rotate(-9.3 65.6 508.6)"/><ellipse cx="82.8" cy="520.3" rx="11.6" ry="5.0" stroke-width="1.28" transform="rotate(-9.3 82.8 520.3)"/><ellipse cx="100.8" cy="532.7" rx="11.8" ry="5.3" stroke-width="1.31" transform="rotate(-9.2 100.8 532.7)"/><ellipse cx="119.9" cy="545.7" rx="12.1" ry="5.6" stroke-width="1.34" transform="rotate(-9.1 119.9 545.7)"/><ellipse cx="140.1" cy="559.6" rx="12.4" ry="6.0" stroke-width="1.37" transform="rotate(-8.9 140.1 559.6)"/><ellipse cx="161.5" cy="574.2" rx="12.7" ry="6.4" stroke-width="1.40" transform="rotate(-8.6 161.5 574.2)"/><ellipse cx="184.2" cy="589.8" rx="13.0" ry="6.8" stroke-width="1.44" transform="rotate(-8.3 184.2 589.8)"/><ellipse cx="208.4" cy="606.3" rx="13.3" ry="7.3" stroke-width="1.47" transform="rotate(-7.8 208.4 606.3)"/><ellipse cx="234.1" cy="623.9" rx="13.7" ry="7.8" stroke-width="1.51" transform="rotate(-7.1 234.1 623.9)"/><ellipse cx="261.6" cy="642.8" rx="14.1" ry="8.4" stroke-width="1.56" transform="rotate(-6.2 261.6 642.8)"/><ellipse cx="-16.2" cy="425.2" rx="9.4" ry="3.0" stroke-width="1.05" transform="rotate(-8.3 -16.2 425.2)"/><ellipse cx="-4.2" cy="432.9" rx="9.6" ry="3.1" stroke-width="1.06" transform="rotate(-8.4 -4.2 432.9)"/><ellipse cx="8.4" cy="440.9" rx="9.8" ry="3.3" stroke-width="1.08" transform="rotate(-8.4 8.4 440.9)"/><ellipse cx="21.6" cy="449.3" rx="9.9" ry="3.4" stroke-width="1.10" transform="rotate(-8.5 21.6 449.3)"/><ellipse cx="35.3" cy="458.0" rx="10.1" ry="3.6" stroke-width="1.12" transform="rotate(-8.5 35.3 458.0)"/><ellipse cx="49.7" cy="467.2" rx="10.3" ry="3.8" stroke-width="1.14" transform="rotate(-8.5 49.7 467.2)"/><ellipse cx="64.8" cy="476.8" rx="10.5" ry="4.0" stroke-width="1.16" transform="rotate(-8.4 64.8 476.8)"/><ellipse cx="80.7" cy="486.8" rx="10.7" ry="4.2" stroke-width="1.19" transform="rotate(-8.4 80.7 486.8)"/><ellipse cx="97.3" cy="497.4" rx="10.9" ry="4.5" stroke-width="1.21" transform="rotate(-8.3 97.3 497.4)"/><ellipse cx="114.8" cy="508.5" rx="11.1" ry="4.8" stroke-width="1.23" transform="rotate(-8.2 114.8 508.5)"/><ellipse cx="133.2" cy="520.3" rx="11.4" ry="5.0" stroke-width="1.26" transform="rotate(-8.0 133.2 520.3)"/><ellipse cx="152.7" cy="532.6" rx="11.6" ry="5.3" stroke-width="1.29" transform="rotate(-7.8 152.7 532.6)"/><ellipse cx="173.2" cy="545.7" rx="11.9" ry="5.7" stroke-width="1.32" transform="rotate(-7.5 173.2 545.7)"/><ellipse cx="195.0" cy="559.5" rx="12.2" ry="6.0" stroke-width="1.35" transform="rotate(-7.1 195.0 559.5)"/><ellipse cx="218.0" cy="574.1" rx="12.5" ry="6.4" stroke-width="1.38" transform="rotate(-6.6 218.0 574.1)"/><ellipse cx="242.4" cy="589.7" rx="12.8" ry="6.9" stroke-width="1.42" transform="rotate(-5.9 242.4 589.7)"/><ellipse cx="268.4" cy="606.2" rx="13.1" ry="7.4" stroke-width="1.46" transform="rotate(-5.1 268.4 606.2)"/><ellipse cx="296.1" cy="623.8" rx="13.5" ry="7.9" stroke-width="1.50" transform="rotate(-4.0 296.1 623.8)"/><ellipse cx="325.7" cy="642.7" rx="13.9" ry="8.4" stroke-width="1.54" transform="rotate(-2.6 325.7 642.7)"/><ellipse cx="-0.6" cy="410.8" rx="9.0" ry="2.8" stroke-width="1.00" transform="rotate(-7.7 -0.6 410.8)"/><ellipse cx="11.3" cy="417.9" rx="9.1" ry="2.9" stroke-width="1.01" transform="rotate(-7.7 11.3 417.9)"/><ellipse cx="23.7" cy="425.2" rx="9.3" ry="3.0" stroke-width="1.03" transform="rotate(-7.8 23.7 425.2)"/><ellipse cx="36.6" cy="432.9" rx="9.4" ry="3.2" stroke-width="1.05" transform="rotate(-7.8 36.6 432.9)"/><ellipse cx="50.0" cy="440.9" rx="9.6" ry="3.3" stroke-width="1.06" transform="rotate(-7.7 50.0 440.9)"/><ellipse cx="64.1" cy="449.2" rx="9.8" ry="3.5" stroke-width="1.08" transform="rotate(-7.7 64.1 449.2)"/><ellipse cx="78.9" cy="458.0" rx="10.0" ry="3.7" stroke-width="1.10" transform="rotate(-7.7 78.9 458.0)"/><ellipse cx="94.3" cy="467.1" rx="10.1" ry="3.9" stroke-width="1.12" transform="rotate(-7.6 94.3 467.1)"/><ellipse cx="110.4" cy="476.7" rx="10.3" ry="4.1" stroke-width="1.14" transform="rotate(-7.5 110.4 476.7)"/><ellipse cx="127.4" cy="486.8" rx="10.5" ry="4.3" stroke-width="1.17" transform="rotate(-7.3 127.4 486.8)"/><ellipse cx="145.2" cy="497.4" rx="10.8" ry="4.6" stroke-width="1.19" transform="rotate(-7.1 145.2 497.4)"/><ellipse cx="163.9" cy="508.5" rx="11.0" ry="4.8" stroke-width="1.22" transform="rotate(-6.9 163.9 508.5)"/><ellipse cx="183.7" cy="520.2" rx="11.2" ry="5.1" stroke-width="1.24" transform="rotate(-6.6 183.7 520.2)"/><ellipse cx="204.5" cy="532.6" rx="11.5" ry="5.4" stroke-width="1.27" transform="rotate(-6.2 204.5 532.6)"/><ellipse cx="226.5" cy="545.6" rx="11.7" ry="5.7" stroke-width="1.30" transform="rotate(-5.7 226.5 545.6)"/><ellipse cx="249.8" cy="559.5" rx="12.0" ry="6.1" stroke-width="1.33" transform="rotate(-5.1 249.8 559.5)"/><ellipse cx="274.4" cy="574.1" rx="12.3" ry="6.5" stroke-width="1.37" transform="rotate(-4.3 274.4 574.1)"/><ellipse cx="300.6" cy="589.6" rx="12.7" ry="6.9" stroke-width="1.40" transform="rotate(-3.3 300.6 589.6)"/><ellipse cx="328.4" cy="606.2" rx="13.0" ry="7.4" stroke-width="1.44" transform="rotate(-2.1 328.4 606.2)"/><ellipse cx="358.1" cy="623.8" rx="13.4" ry="7.9" stroke-width="1.49" transform="rotate(-0.7 358.1 623.8)"/><ellipse cx="389.8" cy="642.6" rx="13.9" ry="8.5" stroke-width="1.54" transform="rotate(1.1 389.8 642.6)"/><ellipse cx="25.5" cy="404.1" rx="8.7" ry="2.7" stroke-width="0.97" transform="rotate(-7.2 25.5 404.1)"/><ellipse cx="37.7" cy="410.8" rx="8.9" ry="2.8" stroke-width="0.98" transform="rotate(-7.2 37.7 410.8)"/><ellipse cx="50.3" cy="417.9" rx="9.0" ry="2.9" stroke-width="1.00" transform="rotate(-7.1 50.3 417.9)"/><ellipse cx="63.5" cy="425.2" rx="9.2" ry="3.1" stroke-width="1.01" transform="rotate(-7.1 63.5 425.2)"/><ellipse cx="77.3" cy="432.9" rx="9.3" ry="3.2" stroke-width="1.03" transform="rotate(-7.1 77.3 432.9)"/><ellipse cx="91.6" cy="440.9" rx="9.5" ry="3.4" stroke-width="1.05" transform="rotate(-7.0 91.6 440.9)"/><ellipse cx="106.7" cy="449.2" rx="9.6" ry="3.6" stroke-width="1.07" transform="rotate(-6.9 106.7 449.2)"/><ellipse cx="122.3" cy="458.0" rx="9.8" ry="3.7" stroke-width="1.09" transform="rotate(-6.7 122.3 458.0)"/><ellipse cx="138.8" cy="467.1" rx="10.0" ry="3.9" stroke-width="1.11" transform="rotate(-6.6 138.8 467.1)"/><ellipse cx="156.0" cy="476.7" rx="10.2" ry="4.1" stroke-width="1.13" transform="rotate(-6.4 156.0 476.7)"/><ellipse cx="174.1" cy="486.8" rx="10.4" ry="4.4" stroke-width="1.15" transform="rotate(-6.1 174.1 486.8)"/><ellipse cx="193.1" cy="497.4" rx="10.6" ry="4.6" stroke-width="1.18" transform="rotate(-5.8 193.1 497.4)"/><ellipse cx="213.1" cy="508.5" rx="10.8" ry="4.9" stroke-width="1.20" transform="rotate(-5.4 213.1 508.5)"/><ellipse cx="234.1" cy="520.2" rx="11.1" ry="5.2" stroke-width="1.23" transform="rotate(-4.9 234.1 520.2)"/><ellipse cx="256.3" cy="532.5" rx="11.3" ry="5.5" stroke-width="1.26" transform="rotate(-4.4 256.3 532.5)"/><ellipse cx="279.7" cy="545.6" rx="11.6" ry="5.8" stroke-width="1.29" transform="rotate(-3.7 279.7 545.6)"/><ellipse cx="304.5" cy="559.4" rx="11.9" ry="6.2" stroke-width="1.32" transform="rotate(-2.8 304.5 559.4)"/><ellipse cx="330.8" cy="574.0" rx="12.3" ry="6.5" stroke-width="1.36" transform="rotate(-1.8 330.8 574.0)"/><ellipse cx="358.7" cy="589.6" rx="12.6" ry="7.0" stroke-width="1.40" transform="rotate(-0.6 358.7 589.6)"/><ellipse cx="388.4" cy="606.1" rx="13.0" ry="7.4" stroke-width="1.44" transform="rotate(0.9 388.4 606.1)"/><ellipse cx="420.0" cy="623.7" rx="13.5" ry="7.9" stroke-width="1.49" transform="rotate(2.7 420.0 623.7)"/><ellipse cx="453.8" cy="642.5" rx="14.0" ry="8.4" stroke-width="1.55" transform="rotate(4.8 453.8 642.5)"/><ellipse cx="50.6" cy="397.6" rx="8.5" ry="2.6" stroke-width="0.94" transform="rotate(-6.6 50.6 397.6)"/><ellipse cx="63.0" cy="404.1" rx="8.6" ry="2.7" stroke-width="0.95" transform="rotate(-6.6 63.0 404.1)"/><ellipse cx="75.9" cy="410.8" rx="8.7" ry="2.8" stroke-width="0.97" transform="rotate(-6.5 75.9 410.8)"/><ellipse cx="89.3" cy="417.9" rx="8.9" ry="3.0" stroke-width="0.98" transform="rotate(-6.5 89.3 417.9)"/><ellipse cx="103.4" cy="425.2" rx="9.0" ry="3.1" stroke-width="1.00" transform="rotate(-6.4 103.4 425.2)"/><ellipse cx="118.0" cy="432.9" rx="9.2" ry="3.3" stroke-width="1.02" transform="rotate(-6.3 118.0 432.9)"/><ellipse cx="133.2" cy="440.9" rx="9.3" ry="3.4" stroke-width="1.03" transform="rotate(-6.1 133.2 440.9)"/><ellipse cx="149.2" cy="449.2" rx="9.5" ry="3.6" stroke-width="1.05" transform="rotate(-5.9 149.2 449.2)"/><ellipse cx="165.8" cy="458.0" rx="9.7" ry="3.8" stroke-width="1.07" transform="rotate(-5.7 165.8 458.0)"/><ellipse cx="183.3" cy="467.1" rx="9.9" ry="4.0" stroke-width="1.09" transform="rotate(-5.5 183.3 467.1)"/><ellipse cx="201.6" cy="476.7" rx="10.1" ry="4.2" stroke-width="1.12" transform="rotate(-5.2 201.6 476.7)"/><ellipse cx="220.8" cy="486.8" rx="10.3" ry="4.4" stroke-width="1.14" transform="rotate(-4.8 220.8 486.8)"/><ellipse cx="240.9" cy="497.3" rx="10.5" ry="4.7" stroke-width="1.16" transform="rotate(-4.3 240.9 497.3)"/><ellipse cx="262.1" cy="508.4" rx="10.7" ry="4.9" stroke-width="1.19" transform="rotate(-3.8 262.1 508.4)"/><ellipse cx="284.5" cy="520.2" rx="11.0" ry="5.2" stroke-width="1.22" transform="rotate(-3.2 284.5 520.2)"/><ellipse cx="308.1" cy="532.5" rx="11.3" ry="5.5" stroke-width="1.25" transform="rotate(-2.4 308.1 532.5)"/><ellipse cx="333.0" cy="545.5" rx="11.6" ry="5.8" stroke-width="1.28" transform="rotate(-1.5 333.0 545.5)"/><ellipse cx="359.3" cy="559.3" rx="11.9" ry="6.2" stroke-width="1.32" transform="rotate(-0.5 359.3 559.3)"/><ellipse cx="387.2" cy="574.0" rx="12.2" ry="6.5" stroke-width="1.35" transform="rotate(0.8 387.2 574.0)"/><ellipse cx="416.8" cy="589.5" rx="12.6" ry="6.9" stroke-width="1.40" transform="rotate(2.2 416.8 589.5)"/><ellipse cx="448.3" cy="606.0" rx="13.1" ry="7.4" stroke-width="1.45" transform="rotate(3.9 448.3 606.0)"/><ellipse cx="481.9" cy="623.6" rx="13.6" ry="7.8" stroke-width="1.50" transform="rotate(5.9 481.9 623.6)"/><ellipse cx="517.7" cy="642.4" rx="14.1" ry="8.3" stroke-width="1.57" transform="rotate(8.1 517.7 642.4)"/><ellipse cx="74.7" cy="391.3" rx="8.2" ry="2.5" stroke-width="0.91" transform="rotate(-6.1 74.7 391.3)"/><ellipse cx="87.3" cy="397.6" rx="8.4" ry="2.6" stroke-width="0.93" transform="rotate(-6.0 87.3 397.6)"/><ellipse cx="100.4" cy="404.1" rx="8.5" ry="2.8" stroke-width="0.94" transform="rotate(-5.9 100.4 404.1)"/><ellipse cx="114.1" cy="410.8" rx="8.6" ry="2.9" stroke-width="0.96" transform="rotate(-5.8 114.1 410.8)"/><ellipse cx="128.3" cy="417.9" rx="8.8" ry="3.0" stroke-width="0.97" transform="rotate(-5.7 128.3 417.9)"/><ellipse cx="143.2" cy="425.2" rx="8.9" ry="3.2" stroke-width="0.99" transform="rotate(-5.6 143.2 425.2)"/><ellipse cx="158.6" cy="432.9" rx="9.1" ry="3.3" stroke-width="1.01" transform="rotate(-5.4 158.6 432.9)"/><ellipse cx="174.8" cy="440.9" rx="9.2" ry="3.5" stroke-width="1.02" transform="rotate(-5.2 174.8 440.9)"/><ellipse cx="191.6" cy="449.2" rx="9.4" ry="3.6" stroke-width="1.04" transform="rotate(-4.9 191.6 449.2)"/><ellipse cx="209.3" cy="458.0" rx="9.6" ry="3.8" stroke-width="1.06" transform="rotate(-4.6 209.3 458.0)"/><ellipse cx="227.7" cy="467.1" rx="9.8" ry="4.0" stroke-width="1.08" transform="rotate(-4.3 227.7 467.1)"/><ellipse cx="247.1" cy="476.7" rx="10.0" ry="4.2" stroke-width="1.11" transform="rotate(-3.8 247.1 476.7)"/><ellipse cx="267.4" cy="486.7" rx="10.2" ry="4.4" stroke-width="1.13" transform="rotate(-3.4 267.4 486.7)"/><ellipse cx="288.8" cy="497.3" rx="10.4" ry="4.7" stroke-width="1.15" transform="rotate(-2.8 288.8 497.3)"/><ellipse cx="311.2" cy="508.4" rx="10.7" ry="4.9" stroke-width="1.18" transform="rotate(-2.1 311.2 508.4)"/><ellipse cx="334.8" cy="520.1" rx="10.9" ry="5.2" stroke-width="1.21" transform="rotate(-1.3 334.8 520.1)"/><ellipse cx="359.8" cy="532.5" rx="11.2" ry="5.5" stroke-width="1.24" transform="rotate(-0.4 359.8 532.5)"/><ellipse cx="386.1" cy="545.5" rx="11.5" ry="5.8" stroke-width="1.28" transform="rotate(0.7 386.1 545.5)"/><ellipse cx="414.0" cy="559.3" rx="11.9" ry="6.2" stroke-width="1.32" transform="rotate(1.9 414.0 559.3)"/><ellipse cx="443.5" cy="573.9" rx="12.3" ry="6.5" stroke-width="1.36" transform="rotate(3.3 443.5 573.9)"/><ellipse cx="474.8" cy="589.4" rx="12.7" ry="6.9" stroke-width="1.41" transform="rotate(4.9 474.8 589.4)"/><ellipse cx="508.2" cy="605.9" rx="13.2" ry="7.3" stroke-width="1.46" transform="rotate(6.8 508.2 605.9)"/><ellipse cx="543.7" cy="623.5" rx="13.8" ry="7.7" stroke-width="1.52" transform="rotate(8.8 543.7 623.5)"/><ellipse cx="581.6" cy="642.3" rx="14.4" ry="8.1" stroke-width="1.59" transform="rotate(11.0 581.6 642.3)"/><ellipse cx="97.9" cy="385.3" rx="8.0" ry="2.5" stroke-width="0.89" transform="rotate(-5.6 97.9 385.3)"/><ellipse cx="110.7" cy="391.3" rx="8.1" ry="2.6" stroke-width="0.90" transform="rotate(-5.5 110.7 391.3)"/><ellipse cx="124.0" cy="397.6" rx="8.3" ry="2.7" stroke-width="0.92" transform="rotate(-5.4 124.0 397.6)"/><ellipse cx="137.9" cy="404.1" rx="8.4" ry="2.8" stroke-width="0.93" transform="rotate(-5.3 137.9 404.1)"/><ellipse cx="152.3" cy="410.8" rx="8.5" ry="2.9" stroke-width="0.95" transform="rotate(-5.1 152.3 410.8)"/><ellipse cx="167.3" cy="417.9" rx="8.7" ry="3.0" stroke-width="0.96" transform="rotate(-4.9 167.3 417.9)"/><ellipse cx="183.0" cy="425.2" rx="8.8" ry="3.2" stroke-width="0.98" transform="rotate(-4.7 183.0 425.2)"/><ellipse cx="199.3" cy="432.9" rx="9.0" ry="3.3" stroke-width="1.00" transform="rotate(-4.5 199.3 432.9)"/><ellipse cx="216.3" cy="440.9" rx="9.1" ry="3.5" stroke-width="1.01" transform="rotate(-4.2 216.3 440.9)"/><ellipse cx="234.1" cy="449.2" rx="9.3" ry="3.7" stroke-width="1.03" transform="rotate(-3.8 234.1 449.2)"/><ellipse cx="252.7" cy="457.9" rx="9.5" ry="3.8" stroke-width="1.05" transform="rotate(-3.4 252.7 457.9)"/><ellipse cx="272.2" cy="467.1" rx="9.7" ry="4.0" stroke-width="1.07" transform="rotate(-3.0 272.2 467.1)"/><ellipse cx="292.6" cy="476.7" rx="9.9" ry="4.2" stroke-width="1.10" transform="rotate(-2.5 292.6 476.7)"/><ellipse cx="314.0" cy="486.7" rx="10.1" ry="4.5" stroke-width="1.12" transform="rotate(-1.8 314.0 486.7)"/><ellipse cx="336.5" cy="497.3" rx="10.4" ry="4.7" stroke-width="1.15" transform="rotate(-1.1 336.5 497.3)"/><ellipse cx="360.2" cy="508.4" rx="10.6" ry="5.0" stroke-width="1.18" transform="rotate(-0.3 360.2 508.4)"/><ellipse cx="385.2" cy="520.1" rx="10.9" ry="5.2" stroke-width="1.21" transform="rotate(0.6 385.2 520.1)"/><ellipse cx="411.5" cy="532.4" rx="11.2" ry="5.5" stroke-width="1.24" transform="rotate(1.6 411.5 532.4)"/><ellipse cx="439.3" cy="545.5" rx="11.6" ry="5.8" stroke-width="1.28" transform="rotate(2.8 439.3 545.5)"/><ellipse cx="468.6" cy="559.2" rx="12.0" ry="6.1" stroke-width="1.32" transform="rotate(4.2 468.6 559.2)"/><ellipse cx="499.8" cy="573.9" rx="12.4" ry="6.5" stroke-width="1.37" transform="rotate(5.7 499.8 573.9)"/><ellipse cx="532.8" cy="589.4" rx="12.9" ry="6.8" stroke-width="1.42" transform="rotate(7.4 532.8 589.4)"/><ellipse cx="568.0" cy="605.9" rx="13.4" ry="7.2" stroke-width="1.48" transform="rotate(9.2 568.0 605.9)"/><ellipse cx="605.4" cy="623.4" rx="14.0" ry="7.6" stroke-width="1.55" transform="rotate(11.2 605.4 623.4)"/><ellipse cx="645.4" cy="642.2" rx="14.7" ry="7.9" stroke-width="1.60" transform="rotate(13.3 645.4 642.2)"/><ellipse cx="120.2" cy="379.5" rx="7.8" ry="2.4" stroke-width="0.87" transform="rotate(-5.1 120.2 379.5)"/><ellipse cx="133.2" cy="385.3" rx="7.9" ry="2.5" stroke-width="0.88" transform="rotate(-5.0 133.2 385.3)"/><ellipse cx="146.7" cy="391.3" rx="8.1" ry="2.6" stroke-width="0.89" transform="rotate(-4.8 146.7 391.3)"/><ellipse cx="160.7" cy="397.6" rx="8.2" ry="2.7" stroke-width="0.91" transform="rotate(-4.7 160.7 397.6)"/><ellipse cx="175.3" cy="404.1" rx="8.3" ry="2.8" stroke-width="0.92" transform="rotate(-4.5 175.3 404.1)"/><ellipse cx="190.5" cy="410.8" rx="8.5" ry="2.9" stroke-width="0.94" transform="rotate(-4.3 190.5 410.8)"/><ellipse cx="206.3" cy="417.9" rx="8.6" ry="3.1" stroke-width="0.95" transform="rotate(-4.0 206.3 417.9)"/><ellipse cx="222.7" cy="425.2" rx="8.7" ry="3.2" stroke-width="0.97" transform="rotate(-3.8 222.7 425.2)"/><ellipse cx="239.9" cy="432.9" rx="8.9" ry="3.4" stroke-width="0.99" transform="rotate(-3.5 239.9 432.9)"/><ellipse cx="257.8" cy="440.9" rx="9.1" ry="3.5" stroke-width="1.01" transform="rotate(-3.1 257.8 440.9)"/><ellipse cx="276.5" cy="449.2" rx="9.3" ry="3.7" stroke-width="1.03" transform="rotate(-2.7 276.5 449.2)"/><ellipse cx="296.1" cy="457.9" rx="9.5" ry="3.9" stroke-width="1.05" transform="rotate(-2.2 296.1 457.9)"/><ellipse cx="316.6" cy="467.1" rx="9.7" ry="4.1" stroke-width="1.07" transform="rotate(-1.6 316.6 467.1)"/><ellipse cx="338.1" cy="476.6" rx="9.9" ry="4.3" stroke-width="1.09" transform="rotate(-1.0 338.1 476.6)"/><ellipse cx="360.6" cy="486.7" rx="10.1" ry="4.5" stroke-width="1.12" transform="rotate(-0.3 360.6 486.7)"/><ellipse cx="384.3" cy="497.2" rx="10.4" ry="4.7" stroke-width="1.15" transform="rotate(0.5 384.3 497.2)"/><ellipse cx="409.2" cy="508.4" rx="10.6" ry="4.9" stroke-width="1.18" transform="rotate(1.4 409.2 508.4)"/><ellipse cx="435.5" cy="520.0" rx="10.9" ry="5.2" stroke-width="1.21" transform="rotate(2.5 435.5 520.0)"/><ellipse cx="463.1" cy="532.4" rx="11.3" ry="5.5" stroke-width="1.25" transform="rotate(3.6 463.1 532.4)"/><ellipse cx="492.3" cy="545.4" rx="11.7" ry="5.8" stroke-width="1.29" transform="rotate(4.9 492.3 545.4)"/><ellipse cx="523.3" cy="559.2" rx="12.1" ry="6.1" stroke-width="1.34" transform="rotate(6.3 523.3 559.2)"/><ellipse cx="556.0" cy="573.8" rx="12.5" ry="6.4" stroke-width="1.39" transform="rotate(7.9 556.0 573.8)"/><ellipse cx="590.8" cy="589.3" rx="13.1" ry="6.7" stroke-width="1.45" transform="rotate(9.5 590.8 589.3)"/><ellipse cx="627.8" cy="605.8" rx="13.7" ry="7.0" stroke-width="1.51" transform="rotate(11.3 627.8 605.8)"/><ellipse cx="667.2" cy="623.3" rx="14.3" ry="7.4" stroke-width="1.59" transform="rotate(13.2 667.2 623.3)"/><ellipse cx="709.2" cy="642.1" rx="15.1" ry="7.7" stroke-width="1.60" transform="rotate(15.0 709.2 642.1)"/><ellipse cx="141.7" cy="373.9" rx="7.6" ry="2.3" stroke-width="0.84" transform="rotate(-4.6 141.7 373.9)"/><ellipse cx="154.9" cy="379.5" rx="7.7" ry="2.4" stroke-width="0.86" transform="rotate(-4.5 154.9 379.5)"/><ellipse cx="168.5" cy="385.3" rx="7.9" ry="2.5" stroke-width="0.87" transform="rotate(-4.3 168.5 385.3)"/><ellipse cx="182.7" cy="391.3" rx="8.0" ry="2.6" stroke-width="0.88" transform="rotate(-4.1 182.7 391.3)"/><ellipse cx="197.4" cy="397.6" rx="8.1" ry="2.7" stroke-width="0.90" transform="rotate(-3.9 197.4 397.6)"/><ellipse cx="212.7" cy="404.1" rx="8.2" ry="2.8" stroke-width="0.91" transform="rotate(-3.7 212.7 404.1)"/><ellipse cx="228.6" cy="410.8" rx="8.4" ry="3.0" stroke-width="0.93" transform="rotate(-3.4 228.6 410.8)"/><ellipse cx="245.2" cy="417.9" rx="8.5" ry="3.1" stroke-width="0.95" transform="rotate(-3.1 245.2 417.9)"/><ellipse cx="262.5" cy="425.2" rx="8.7" ry="3.2" stroke-width="0.96" transform="rotate(-2.8 262.5 425.2)"/><ellipse cx="280.5" cy="432.9" rx="8.9" ry="3.4" stroke-width="0.98" transform="rotate(-2.4 280.5 432.9)"/><ellipse cx="299.3" cy="440.8" rx="9.0" ry="3.5" stroke-width="1.00" transform="rotate(-2.0 299.3 440.8)"/><ellipse cx="318.9" cy="449.2" rx="9.2" ry="3.7" stroke-width="1.02" transform="rotate(-1.5 318.9 449.2)"/><ellipse cx="339.5" cy="457.9" rx="9.4" ry="3.9" stroke-width="1.04" transform="rotate(-0.9 339.5 457.9)"/><ellipse cx="361.0" cy="467.0" rx="9.6" ry="4.1" stroke-width="1.07" transform="rotate(-0.3 361.0 467.0)"/><ellipse cx="383.5" cy="476.6" rx="9.9" ry="4.3" stroke-width="1.09" transform="rotate(0.5 383.5 476.6)"/><ellipse cx="407.2" cy="486.7" rx="10.1" ry="4.5" stroke-width="1.12" transform="rotate(1.3 407.2 486.7)"/><ellipse cx="432.0" cy="497.2" rx="10.4" ry="4.7" stroke-width="1.15" transform="rotate(2.2 432.0 497.2)"/><ellipse cx="458.2" cy="508.3" rx="10.7" ry="4.9" stroke-width="1.18" transform="rotate(3.2 458.2 508.3)"/><ellipse cx="485.7" cy="520.0" rx="11.0" ry="5.2" stroke-width="1.22" transform="rotate(4.3 485.7 520.0)"/><ellipse cx="514.7" cy="532.3" rx="11.4" ry="5.4" stroke-width="1.26" transform="rotate(5.5 514.7 532.3)"/><ellipse cx="545.4" cy="545.4" rx="11.8" ry="5.7" stroke-width="1.30" transform="rotate(6.8 545.4 545.4)"/><ellipse cx="577.8" cy="559.1" rx="12.2" ry="6.0" stroke-width="1.35" transform="rotate(8.2 577.8 559.1)"/><ellipse cx="612.2" cy="573.7" rx="12.7" ry="6.3" stroke-width="1.41" transform="rotate(9.8 612.2 573.7)"/><ellipse cx="648.7" cy="589.2" rx="13.3" ry="6.6" stroke-width="1.47" transform="rotate(11.4 648.7 589.2)"/><ellipse cx="687.5" cy="605.7" rx="14.0" ry="6.9" stroke-width="1.55" transform="rotate(13.0 687.5 605.7)"/><ellipse cx="728.8" cy="623.3" rx="14.7" ry="7.2" stroke-width="1.60" transform="rotate(14.7 728.8 623.3)"/><ellipse cx="162.5" cy="368.6" rx="7.4" ry="2.2" stroke-width="0.82" transform="rotate(-4.1 162.5 368.6)"/><ellipse cx="175.7" cy="373.9" rx="7.6" ry="2.3" stroke-width="0.84" transform="rotate(-4.0 175.7 373.9)"/><ellipse cx="189.5" cy="379.5" rx="7.7" ry="2.4" stroke-width="0.85" transform="rotate(-3.8 189.5 379.5)"/><ellipse cx="203.8" cy="385.3" rx="7.8" ry="2.5" stroke-width="0.86" transform="rotate(-3.6 203.8 385.3)"/><ellipse cx="218.7" cy="391.3" rx="7.9" ry="2.6" stroke-width="0.88" transform="rotate(-3.4 218.7 391.3)"/><ellipse cx="234.1" cy="397.6" rx="8.0" ry="2.7" stroke-width="0.89" transform="rotate(-3.1 234.1 397.6)"/><ellipse cx="250.1" cy="404.1" rx="8.2" ry="2.8" stroke-width="0.91" transform="rotate(-2.9 250.1 404.1)"/><ellipse cx="266.8" cy="410.8" rx="8.3" ry="3.0" stroke-width="0.92" transform="rotate(-2.5 266.8 410.8)"/><ellipse cx="284.1" cy="417.9" rx="8.5" ry="3.1" stroke-width="0.94" transform="rotate(-2.2 284.1 417.9)"/><ellipse cx="302.2" cy="425.2" rx="8.6" ry="3.2" stroke-width="0.96" transform="rotate(-1.8 302.2 425.2)"/><ellipse cx="321.1" cy="432.9" rx="8.8" ry="3.4" stroke-width="0.98" transform="rotate(-1.3 321.1 432.9)"/><ellipse cx="340.7" cy="440.8" rx="9.0" ry="3.5" stroke-width="1.00" transform="rotate(-0.8 340.7 440.8)"/><ellipse cx="361.3" cy="449.2" rx="9.2" ry="3.7" stroke-width="1.02" transform="rotate(-0.2 361.3 449.2)"/><ellipse cx="382.8" cy="457.9" rx="9.4" ry="3.9" stroke-width="1.04" transform="rotate(0.4 382.8 457.9)"/><ellipse cx="405.3" cy="467.0" rx="9.6" ry="4.1" stroke-width="1.07" transform="rotate(1.1 405.3 467.0)"/><ellipse cx="429.0" cy="476.6" rx="9.9" ry="4.2" stroke-width="1.09" transform="rotate(1.9 429.0 476.6)"/><ellipse cx="453.7" cy="486.6" rx="10.1" ry="4.4" stroke-width="1.12" transform="rotate(2.8 453.7 486.6)"/><ellipse cx="479.7" cy="497.2" rx="10.4" ry="4.7" stroke-width="1.16" transform="rotate(3.8 479.7 497.2)"/><ellipse cx="507.1" cy="508.3" rx="10.8" ry="4.9" stroke-width="1.19" transform="rotate(4.8 507.1 508.3)"/><ellipse cx="535.9" cy="520.0" rx="11.1" ry="5.1" stroke-width="1.23" transform="rotate(6.0 535.9 520.0)"/><ellipse cx="566.3" cy="532.3" rx="11.5" ry="5.4" stroke-width="1.27" transform="rotate(7.2 566.3 532.3)"/><ellipse cx="598.4" cy="545.3" rx="11.9" ry="5.6" stroke-width="1.32" transform="rotate(8.5 598.4 545.3)"/><ellipse cx="632.4" cy="559.1" rx="12.4" ry="5.9" stroke-width="1.38" transform="rotate(9.9 632.4 559.1)"/><ellipse cx="668.4" cy="573.7" rx="13.0" ry="6.1" stroke-width="1.44" transform="rotate(11.4 668.4 573.7)"/><ellipse cx="706.6" cy="589.2" rx="13.6" ry="6.4" stroke-width="1.51" transform="rotate(12.8 706.6 589.2)"/><ellipse cx="747.2" cy="605.6" rx="14.3" ry="6.7" stroke-width="1.59" transform="rotate(14.4 747.2 605.6)"/><ellipse cx="182.5" cy="363.4" rx="7.3" ry="2.2" stroke-width="0.81" transform="rotate(-3.7 182.5 363.4)"/><ellipse cx="195.9" cy="368.6" rx="7.4" ry="2.3" stroke-width="0.82" transform="rotate(-3.5 195.9 368.6)"/><ellipse cx="209.8" cy="374.0" rx="7.5" ry="2.3" stroke-width="0.83" transform="rotate(-3.3 209.8 374.0)"/><ellipse cx="224.2" cy="379.5" rx="7.6" ry="2.4" stroke-width="0.84" transform="rotate(-3.1 224.2 379.5)"/><ellipse cx="239.1" cy="385.3" rx="7.7" ry="2.5" stroke-width="0.86" transform="rotate(-2.9 239.1 385.3)"/><ellipse cx="254.6" cy="391.3" rx="7.9" ry="2.6" stroke-width="0.87" transform="rotate(-2.6 254.6 391.3)"/><ellipse cx="270.7" cy="397.6" rx="8.0" ry="2.7" stroke-width="0.89" transform="rotate(-2.3 270.7 397.6)"/><ellipse cx="287.5" cy="404.1" rx="8.1" ry="2.9" stroke-width="0.90" transform="rotate(-2.0 287.5 404.1)"/><ellipse cx="304.9" cy="410.8" rx="8.3" ry="3.0" stroke-width="0.92" transform="rotate(-1.6 304.9 410.8)"/><ellipse cx="323.0" cy="417.9" rx="8.5" ry="3.1" stroke-width="0.94" transform="rotate(-1.2 323.0 417.9)"/><ellipse cx="341.9" cy="425.2" rx="8.6" ry="3.2" stroke-width="0.95" transform="rotate(-0.7 341.9 425.2)"/><ellipse cx="361.6" cy="432.9" rx="8.8" ry="3.4" stroke-width="0.97" transform="rotate(-0.2 361.6 432.9)"/><ellipse cx="382.2" cy="440.8" rx="9.0" ry="3.5" stroke-width="1.00" transform="rotate(0.4 382.2 440.8)"/><ellipse cx="403.7" cy="449.2" rx="9.2" ry="3.7" stroke-width="1.02" transform="rotate(1.0 403.7 449.2)"/><ellipse cx="426.2" cy="457.9" rx="9.4" ry="3.9" stroke-width="1.04" transform="rotate(1.7 426.2 457.9)"/><ellipse cx="449.7" cy="467.0" rx="9.7" ry="4.0" stroke-width="1.07" transform="rotate(2.5 449.7 467.0)"/><ellipse cx="474.3" cy="476.6" rx="9.9" ry="4.2" stroke-width="1.10" transform="rotate(3.3 474.3 476.6)"/><ellipse cx="500.2" cy="486.6" rx="10.2" ry="4.4" stroke-width="1.13" transform="rotate(4.3 500.2 486.6)"/><ellipse cx="527.4" cy="497.2" rx="10.5" ry="4.6" stroke-width="1.17" transform="rotate(5.3 527.4 497.2)"/><ellipse cx="556.0" cy="508.3" rx="10.9" ry="4.8" stroke-width="1.20" transform="rotate(6.3 556.0 508.3)"/><ellipse cx="586.1" cy="519.9" rx="11.3" ry="5.0" stroke-width="1.25" transform="rotate(7.5 586.1 519.9)"/><ellipse cx="617.9" cy="532.3" rx="11.7" ry="5.3" stroke-width="1.29" transform="rotate(8.7 617.9 532.3)"/><ellipse cx="651.4" cy="545.3" rx="12.2" ry="5.5" stroke-width="1.35" transform="rotate(10.0 651.4 545.3)"/><ellipse cx="686.9" cy="559.0" rx="12.7" ry="5.7" stroke-width="1.41" transform="rotate(11.3 686.9 559.0)"/><ellipse cx="724.5" cy="573.6" rx="13.3" ry="6.0" stroke-width="1.47" transform="rotate(12.7 724.5 573.6)"/><ellipse cx="201.8" cy="358.3" rx="7.1" ry="2.1" stroke-width="0.79" transform="rotate(-3.3 201.8 358.3)"/><ellipse cx="215.3" cy="363.4" rx="7.2" ry="2.2" stroke-width="0.80" transform="rotate(-3.1 215.3 363.4)"/><ellipse cx="229.3" cy="368.6" rx="7.3" ry="2.3" stroke-width="0.81" transform="rotate(-2.9 229.3 368.6)"/><ellipse cx="243.8" cy="374.0" rx="7.5" ry="2.4" stroke-width="0.83" transform="rotate(-2.7 243.8 374.0)"/><ellipse cx="258.8" cy="379.5" rx="7.6" ry="2.4" stroke-width="0.84" transform="rotate(-2.4 258.8 379.5)"/><ellipse cx="274.4" cy="385.3" rx="7.7" ry="2.5" stroke-width="0.85" transform="rotate(-2.1 274.4 385.3)"/><ellipse cx="290.6" cy="391.4" rx="7.8" ry="2.6" stroke-width="0.87" transform="rotate(-1.8 290.6 391.4)"/><ellipse cx="307.4" cy="397.6" rx="8.0" ry="2.8" stroke-width="0.88" transform="rotate(-1.5 307.4 397.6)"/><ellipse cx="324.8" cy="404.1" rx="8.1" ry="2.9" stroke-width="0.90" transform="rotate(-1.1 324.8 404.1)"/><ellipse cx="343.0" cy="410.8" rx="8.3" ry="3.0" stroke-width="0.92" transform="rotate(-0.6 343.0 410.8)"/><ellipse cx="361.9" cy="417.9" rx="8.4" ry="3.1" stroke-width="0.93" transform="rotate(-0.2 361.9 417.9)"/><ellipse cx="381.6" cy="425.2" rx="8.6" ry="3.2" stroke-width="0.95" transform="rotate(0.4 381.6 425.2)"/><ellipse cx="402.1" cy="432.8" rx="8.8" ry="3.4" stroke-width="0.97" transform="rotate(0.9 402.1 432.8)"/><ellipse cx="423.6" cy="440.8" rx="9.0" ry="3.5" stroke-width="1.00" transform="rotate(1.6 423.6 440.8)"/><ellipse cx="446.0" cy="449.2" rx="9.2" ry="3.7" stroke-width="1.02" transform="rotate(2.2 446.0 449.2)"/><ellipse cx="469.5" cy="457.9" rx="9.5" ry="3.8" stroke-width="1.05" transform="rotate(3.0 469.5 457.9)"/><ellipse cx="494.0" cy="467.0" rx="9.7" ry="4.0" stroke-width="1.08" transform="rotate(3.8 494.0 467.0)"/><ellipse cx="519.7" cy="476.6" rx="10.0" ry="4.2" stroke-width="1.11" transform="rotate(4.7 519.7 476.6)"/><ellipse cx="546.7" cy="486.6" rx="10.3" ry="4.4" stroke-width="1.14" transform="rotate(5.6 546.7 486.6)"/><ellipse cx="575.1" cy="497.1" rx="10.6" ry="4.6" stroke-width="1.18" transform="rotate(6.7 575.1 497.1)"/><ellipse cx="604.9" cy="508.2" rx="11.0" ry="4.8" stroke-width="1.22" transform="rotate(7.7 604.9 508.2)"/><ellipse cx="636.3" cy="519.9" rx="11.4" ry="5.0" stroke-width="1.27" transform="rotate(8.9 636.3 519.9)"/><ellipse cx="669.4" cy="532.2" rx="11.9" ry="5.2" stroke-width="1.32" transform="rotate(10.0 669.4 532.2)"/><ellipse cx="704.4" cy="545.2" rx="12.4" ry="5.4" stroke-width="1.37" transform="rotate(11.2 704.4 545.2)"/><ellipse cx="741.4" cy="559.0" rx="13.0" ry="5.6" stroke-width="1.44" transform="rotate(12.5 741.4 559.0)"/><ellipse cx="220.5" cy="353.5" rx="7.0" ry="2.0" stroke-width="0.77" transform="rotate(-2.9 220.5 353.5)"/><ellipse cx="234.1" cy="358.4" rx="7.1" ry="2.1" stroke-width="0.78" transform="rotate(-2.7 234.1 358.4)"/><ellipse cx="248.1" cy="363.4" rx="7.2" ry="2.2" stroke-width="0.80" transform="rotate(-2.5 248.1 363.4)"/><ellipse cx="262.7" cy="368.6" rx="7.3" ry="2.3" stroke-width="0.81" transform="rotate(-2.2 262.7 368.6)"/><ellipse cx="277.8" cy="374.0" rx="7.4" ry="2.4" stroke-width="0.82" transform="rotate(-1.9 277.8 374.0)"/><ellipse cx="293.4" cy="379.6" rx="7.5" ry="2.5" stroke-width="0.83" transform="rotate(-1.7 293.4 379.6)"/><ellipse cx="309.6" cy="385.3" rx="7.7" ry="2.6" stroke-width="0.85" transform="rotate(-1.3 309.6 385.3)"/><ellipse cx="326.5" cy="391.4" rx="7.8" ry="2.7" stroke-width="0.86" transform="rotate(-1.0 326.5 391.4)"/><ellipse cx="344.0" cy="397.6" rx="7.9" ry="2.8" stroke-width="0.88" transform="rotate(-0.6 344.0 397.6)"/><ellipse cx="362.1" cy="404.1" rx="8.1" ry="2.9" stroke-width="0.90" transform="rotate(-0.1 362.1 404.1)"/><ellipse cx="381.1" cy="410.8" rx="8.3" ry="3.0" stroke-width="0.92" transform="rotate(0.3 381.1 410.8)"/><ellipse cx="400.7" cy="417.9" rx="8.4" ry="3.1" stroke-width="0.93" transform="rotate(0.8 400.7 417.9)"/><ellipse cx="421.3" cy="425.2" rx="8.6" ry="3.2" stroke-width="0.96" transform="rotate(1.4 421.3 425.2)"/><ellipse cx="442.7" cy="432.8" rx="8.8" ry="3.4" stroke-width="0.98" transform="rotate(2.0 442.7 432.8)"/><ellipse cx="465.0" cy="440.8" rx="9.0" ry="3.5" stroke-width="1.00" transform="rotate(2.7 465.0 440.8)"/><ellipse cx="488.3" cy="449.2" rx="9.3" ry="3.7" stroke-width="1.03" transform="rotate(3.4 488.3 449.2)"/><ellipse cx="512.7" cy="457.9" rx="9.5" ry="3.8" stroke-width="1.05" transform="rotate(4.2 512.7 457.9)"/><ellipse cx="538.3" cy="467.0" rx="9.8" ry="4.0" stroke-width="1.09" transform="rotate(5.1 538.3 467.0)"/><ellipse cx="565.1" cy="476.5" rx="10.1" ry="4.1" stroke-width="1.12" transform="rotate(5.9 565.1 476.5)"/><ellipse cx="593.2" cy="486.6" rx="10.4" ry="4.3" stroke-width="1.15" transform="rotate(6.9 593.2 486.6)"/><ellipse cx="622.7" cy="497.1" rx="10.8" ry="4.5" stroke-width="1.19" transform="rotate(7.9 622.7 497.1)"/><ellipse cx="653.7" cy="508.2" rx="11.2" ry="4.7" stroke-width="1.24" transform="rotate(9.0 653.7 508.2)"/><ellipse cx="686.4" cy="519.9" rx="11.6" ry="4.9" stroke-width="1.29" transform="rotate(10.0 686.4 519.9)"/><ellipse cx="720.9" cy="532.2" rx="12.1" ry="5.1" stroke-width="1.34" transform="rotate(11.1 720.9 532.2)"/><ellipse cx="757.3" cy="545.2" rx="12.7" ry="5.3" stroke-width="1.40" transform="rotate(12.3 757.3 545.2)"/><ellipse cx="238.5" cy="348.8" rx="6.8" ry="2.0" stroke-width="0.76" transform="rotate(-2.5 238.5 348.8)"/><ellipse cx="252.2" cy="353.5" rx="6.9" ry="2.1" stroke-width="0.77" transform="rotate(-2.3 252.2 353.5)"/><ellipse cx="266.3" cy="358.4" rx="7.0" ry="2.1" stroke-width="0.78" transform="rotate(-2.0 266.3 358.4)"/><ellipse cx="280.9" cy="363.4" rx="7.2" ry="2.2" stroke-width="0.79" transform="rotate(-1.8 280.9 363.4)"/><ellipse cx="296.1" cy="368.6" rx="7.3" ry="2.3" stroke-width="0.80" transform="rotate(-1.5 296.1 368.6)"/><ellipse cx="311.8" cy="374.0" rx="7.4" ry="2.4" stroke-width="0.82" transform="rotate(-1.2 311.8 374.0)"/><ellipse cx="328.0" cy="379.6" rx="7.5" ry="2.5" stroke-width="0.83" transform="rotate(-0.9 328.0 379.6)"/><ellipse cx="344.9" cy="385.4" rx="7.7" ry="2.6" stroke-width="0.85" transform="rotate(-0.5 344.9 385.4)"/><ellipse cx="362.4" cy="391.4" rx="7.8" ry="2.7" stroke-width="0.86" transform="rotate(-0.1 362.4 391.4)"/><ellipse cx="380.6" cy="397.6" rx="7.9" ry="2.8" stroke-width="0.88" transform="rotate(0.3 380.6 397.6)"/><ellipse cx="399.5" cy="404.1" rx="8.1" ry="2.9" stroke-width="0.90" transform="rotate(0.8 399.5 404.1)"/><ellipse cx="419.1" cy="410.8" rx="8.3" ry="3.0" stroke-width="0.92" transform="rotate(1.3 419.1 410.8)"/><ellipse cx="439.6" cy="417.9" rx="8.5" ry="3.1" stroke-width="0.94" transform="rotate(1.8 439.6 417.9)"/><ellipse cx="460.9" cy="425.2" rx="8.7" ry="3.2" stroke-width="0.96" transform="rotate(2.4 460.9 425.2)"/><ellipse cx="483.2" cy="432.8" rx="8.9" ry="3.4" stroke-width="0.98" transform="rotate(3.1 483.2 432.8)"/><ellipse cx="506.4" cy="440.8" rx="9.1" ry="3.5" stroke-width="1.01" transform="rotate(3.8 506.4 440.8)"/><ellipse cx="530.6" cy="449.1" rx="9.3" ry="3.6" stroke-width="1.03" transform="rotate(4.6 530.6 449.1)"/><ellipse cx="556.0" cy="457.9" rx="9.6" ry="3.8" stroke-width="1.06" transform="rotate(5.4 556.0 457.9)"/><ellipse cx="582.5" cy="467.0" rx="9.9" ry="3.9" stroke-width="1.10" transform="rotate(6.2 582.5 467.0)"/><ellipse cx="610.4" cy="476.5" rx="10.2" ry="4.1" stroke-width="1.13" transform="rotate(7.1 610.4 476.5)"/><ellipse cx="639.6" cy="486.6" rx="10.6" ry="4.3" stroke-width="1.17" transform="rotate(8.0 639.6 486.6)"/><ellipse cx="670.2" cy="497.1" rx="11.0" ry="4.4" stroke-width="1.21" transform="rotate(9.0 670.2 497.1)"/><ellipse cx="702.5" cy="508.2" rx="11.4" ry="4.6" stroke-width="1.26" transform="rotate(10.0 702.5 508.2)"/><ellipse cx="736.5" cy="519.8" rx="11.9" ry="4.8" stroke-width="1.31" transform="rotate(11.0 736.5 519.8)"/><ellipse cx="256.0" cy="344.3" rx="6.7" ry="1.9" stroke-width="0.74" transform="rotate(-2.1 256.0 344.3)"/><ellipse cx="269.7" cy="348.8" rx="6.8" ry="2.0" stroke-width="0.75" transform="rotate(-1.9 269.7 348.8)"/><ellipse cx="283.9" cy="353.5" rx="6.9" ry="2.1" stroke-width="0.77" transform="rotate(-1.7 283.9 353.5)"/><ellipse cx="298.6" cy="358.4" rx="7.0" ry="2.1" stroke-width="0.78" transform="rotate(-1.4 298.6 358.4)"/><ellipse cx="313.7" cy="363.4" rx="7.1" ry="2.2" stroke-width="0.79" transform="rotate(-1.1 313.7 363.4)"/><ellipse cx="329.4" cy="368.6" rx="7.2" ry="2.3" stroke-width="0.80" transform="rotate(-0.8 329.4 368.6)"/><ellipse cx="345.7" cy="374.0" rx="7.4" ry="2.4" stroke-width="0.82" transform="rotate(-0.5 345.7 374.0)"/><ellipse cx="362.6" cy="379.6" rx="7.5" ry="2.5" stroke-width="0.83" transform="rotate(-0.1 362.6 379.6)"/><ellipse cx="380.1" cy="385.4" rx="7.6" ry="2.6" stroke-width="0.85" transform="rotate(0.3 380.1 385.4)"/><ellipse cx="398.3" cy="391.4" rx="7.8" ry="2.7" stroke-width="0.86" transform="rotate(0.7 398.3 391.4)"/><ellipse cx="417.1" cy="397.6" rx="8.0" ry="2.8" stroke-width="0.88" transform="rotate(1.2 417.1 397.6)"/><ellipse cx="436.8" cy="404.1" rx="8.1" ry="2.9" stroke-width="0.90" transform="rotate(1.7 436.8 404.1)"/><ellipse cx="457.2" cy="410.8" rx="8.3" ry="3.0" stroke-width="0.92" transform="rotate(2.2 457.2 410.8)"/><ellipse cx="478.4" cy="417.9" rx="8.5" ry="3.1" stroke-width="0.94" transform="rotate(2.8 478.4 417.9)"/><ellipse cx="500.5" cy="425.2" rx="8.7" ry="3.2" stroke-width="0.96" transform="rotate(3.5 500.5 425.2)"/><ellipse cx="523.6" cy="432.8" rx="8.9" ry="3.3" stroke-width="0.99" transform="rotate(4.1 523.6 432.8)"/><ellipse cx="547.7" cy="440.8" rx="9.2" ry="3.5" stroke-width="1.01" transform="rotate(4.8 547.7 440.8)"/><ellipse cx="572.9" cy="449.1" rx="9.4" ry="3.6" stroke-width="1.04" transform="rotate(5.6 572.9 449.1)"/><ellipse cx="599.2" cy="457.8" rx="9.7" ry="3.7" stroke-width="1.08" transform="rotate(6.4 599.2 457.8)"/><ellipse cx="626.8" cy="467.0" rx="10.0" ry="3.9" stroke-width="1.11" transform="rotate(7.2 626.8 467.0)"/><ellipse cx="655.7" cy="476.5" rx="10.4" ry="4.0" stroke-width="1.15" transform="rotate(8.1 655.7 476.5)"/><ellipse cx="686.0" cy="486.5" rx="10.7" ry="4.2" stroke-width="1.19" transform="rotate(9.0 686.0 486.5)"/><ellipse cx="717.8" cy="497.1" rx="11.2" ry="4.3" stroke-width="1.24" transform="rotate(10.0 717.8 497.1)"/><ellipse cx="751.3" cy="508.1" rx="11.6" ry="4.5" stroke-width="1.29" transform="rotate(10.9 751.3 508.1)"/><ellipse cx="272.9" cy="339.9" rx="6.6" ry="1.9" stroke-width="0.73" transform="rotate(-1.8 272.9 339.9)"/><ellipse cx="286.6" cy="344.3" rx="6.7" ry="1.9" stroke-width="0.74" transform="rotate(-1.5 286.6 344.3)"/><ellipse cx="300.9" cy="348.9" rx="6.8" ry="2.0" stroke-width="0.75" transform="rotate(-1.3 300.9 348.9)"/><ellipse cx="315.6" cy="353.5" rx="6.9" ry="2.1" stroke-width="0.76" transform="rotate(-1.0 315.6 353.5)"/><ellipse cx="330.8" cy="358.4" rx="7.0" ry="2.1" stroke-width="0.78" transform="rotate(-0.7 330.8 358.4)"/><ellipse cx="346.5" cy="363.4" rx="7.1" ry="2.2" stroke-width="0.79" transform="rotate(-0.4 346.5 363.4)"/><ellipse cx="362.8" cy="368.6" rx="7.2" ry="2.3" stroke-width="0.80" transform="rotate(-0.1 362.8 368.6)"/><ellipse cx="379.7" cy="374.0" rx="7.4" ry="2.4" stroke-width="0.82" transform="rotate(0.3 379.7 374.0)"/><ellipse cx="397.2" cy="379.6" rx="7.5" ry="2.5" stroke-width="0.83" transform="rotate(0.7 397.2 379.6)"/><ellipse cx="415.3" cy="385.4" rx="7.7" ry="2.6" stroke-width="0.85" transform="rotate(1.1 415.3 385.4)"/><ellipse cx="434.1" cy="391.4" rx="7.8" ry="2.6" stroke-width="0.86" transform="rotate(1.6 434.1 391.4)"/><ellipse cx="453.7" cy="397.6" rx="8.0" ry="2.7" stroke-width="0.88" transform="rotate(2.0 453.7 397.6)"/><ellipse cx="474.0" cy="404.1" rx="8.1" ry="2.9" stroke-width="0.90" transform="rotate(2.6 474.0 404.1)"/><ellipse cx="495.2" cy="410.8" rx="8.3" ry="3.0" stroke-width="0.92" transform="rotate(3.2 495.2 410.8)"/><ellipse cx="517.2" cy="417.9" rx="8.5" ry="3.1" stroke-width="0.95" transform="rotate(3.8 517.2 417.9)"/><ellipse cx="540.1" cy="425.2" rx="8.8" ry="3.2" stroke-width="0.97" transform="rotate(4.4 540.1 425.2)"/><ellipse cx="564.1" cy="432.8" rx="9.0" ry="3.3" stroke-width="1.00" transform="rotate(5.1 564.1 432.8)"/><ellipse cx="589.0" cy="440.8" rx="9.3" ry="3.4" stroke-width="1.02" transform="rotate(5.8 589.0 440.8)"/><ellipse cx="615.1" cy="449.1" rx="9.5" ry="3.6" stroke-width="1.06" transform="rotate(6.6 615.1 449.1)"/><ellipse cx="642.4" cy="457.8" rx="9.8" ry="3.7" stroke-width="1.09" transform="rotate(7.4 642.4 457.8)"/><ellipse cx="671.0" cy="466.9" rx="10.2" ry="3.8" stroke-width="1.13" transform="rotate(8.2 671.0 466.9)"/><ellipse cx="700.9" cy="476.5" rx="10.5" ry="4.0" stroke-width="1.17" transform="rotate(9.0 700.9 476.5)"/><ellipse cx="732.3" cy="486.5" rx="10.9" ry="4.1" stroke-width="1.21" transform="rotate(9.9 732.3 486.5)"/><ellipse cx="289.2" cy="335.7" rx="6.5" ry="1.8" stroke-width="0.72" transform="rotate(-1.4 289.2 335.7)"/><ellipse cx="303.0" cy="339.9" rx="6.6" ry="1.9" stroke-width="0.73" transform="rotate(-1.2 303.0 339.9)"/><ellipse cx="317.3" cy="344.3" rx="6.7" ry="1.9" stroke-width="0.74" transform="rotate(-1.0 317.3 344.3)"/><ellipse cx="332.0" cy="348.9" rx="6.8" ry="2.0" stroke-width="0.75" transform="rotate(-0.7 332.0 348.9)"/><ellipse cx="347.2" cy="353.6" rx="6.9" ry="2.1" stroke-width="0.76" transform="rotate(-0.4 347.2 353.6)"/><ellipse cx="363.0" cy="358.4" rx="7.0" ry="2.1" stroke-width="0.77" transform="rotate(-0.1 363.0 358.4)"/><ellipse cx="379.3" cy="363.4" rx="7.1" ry="2.2" stroke-width="0.79" transform="rotate(0.3 379.3 363.4)"/><ellipse cx="396.1" cy="368.6" rx="7.2" ry="2.3" stroke-width="0.80" transform="rotate(0.6 396.1 368.6)"/><ellipse cx="413.6" cy="374.0" rx="7.4" ry="2.4" stroke-width="0.82" transform="rotate(1.0 413.6 374.0)"/><ellipse cx="431.7" cy="379.6" rx="7.5" ry="2.5" stroke-width="0.83" transform="rotate(1.4 431.7 379.6)"/><ellipse cx="450.5" cy="385.4" rx="7.7" ry="2.5" stroke-width="0.85" transform="rotate(1.9 450.5 385.4)"/><ellipse cx="470.0" cy="391.4" rx="7.8" ry="2.6" stroke-width="0.87" transform="rotate(2.4 470.0 391.4)"/><ellipse cx="490.2" cy="397.6" rx="8.0" ry="2.7" stroke-width="0.89" transform="rotate(2.9 490.2 397.6)"/><ellipse cx="511.3" cy="404.1" rx="8.2" ry="2.8" stroke-width="0.91" transform="rotate(3.4 511.3 404.1)"/><ellipse cx="533.2" cy="410.9" rx="8.4" ry="2.9" stroke-width="0.93" transform="rotate(4.0 533.2 410.9)"/><ellipse cx="556.0" cy="417.9" rx="8.6" ry="3.0" stroke-width="0.95" transform="rotate(4.7 556.0 417.9)"/><ellipse cx="579.7" cy="425.2" rx="8.8" ry="3.2" stroke-width="0.98" transform="rotate(5.3 579.7 425.2)"/><ellipse cx="604.5" cy="432.8" rx="9.1" ry="3.3" stroke-width="1.01" transform="rotate(6.0 604.5 432.8)"/><ellipse cx="630.3" cy="440.8" rx="9.4" ry="3.4" stroke-width="1.04" transform="rotate(6.7 630.3 440.8)"/><ellipse cx="657.4" cy="449.1" rx="9.7" ry="3.5" stroke-width="1.07" transform="rotate(7.5 657.4 449.1)"/><ellipse cx="685.6" cy="457.8" rx="10.0" ry="3.6" stroke-width="1.11" transform="rotate(8.2 685.6 457.8)"/><ellipse cx="715.2" cy="466.9" rx="10.3" ry="3.8" stroke-width="1.14" transform="rotate(9.0 715.2 466.9)"/><ellipse cx="746.2" cy="476.5" rx="10.7" ry="3.9" stroke-width="1.19" transform="rotate(9.8 746.2 476.5)"/><ellipse cx="305.1" cy="331.6" rx="6.4" ry="1.8" stroke-width="0.70" transform="rotate(-1.1 305.1 331.6)"/><ellipse cx="318.9" cy="335.7" rx="6.5" ry="1.8" stroke-width="0.71" transform="rotate(-0.9 318.9 335.7)"/><ellipse cx="333.2" cy="339.9" rx="6.5" ry="1.9" stroke-width="0.73" transform="rotate(-0.6 333.2 339.9)"/><ellipse cx="347.9" cy="344.3" rx="6.7" ry="1.9" stroke-width="0.74" transform="rotate(-0.4 347.9 344.3)"/><ellipse cx="363.2" cy="348.9" rx="6.8" ry="2.0" stroke-width="0.75" transform="rotate(-0.1 363.2 348.9)"/><ellipse cx="378.9" cy="353.6" rx="6.9" ry="2.1" stroke-width="0.76" transform="rotate(0.2 378.9 353.6)"/><ellipse cx="395.2" cy="358.4" rx="7.0" ry="2.1" stroke-width="0.77" transform="rotate(0.6 395.2 358.4)"/><ellipse cx="412.0" cy="363.4" rx="7.1" ry="2.2" stroke-width="0.79" transform="rotate(0.9 412.0 363.4)"/><ellipse cx="429.5" cy="368.6" rx="7.2" ry="2.3" stroke-width="0.80" transform="rotate(1.3 429.5 368.6)"/><ellipse cx="447.5" cy="374.0" rx="7.4" ry="2.4" stroke-width="0.82" transform="rotate(1.7 447.5 374.0)"/><ellipse cx="466.2" cy="379.6" rx="7.5" ry="2.4" stroke-width="0.84" transform="rotate(2.2 466.2 379.6)"/><ellipse cx="485.7" cy="385.4" rx="7.7" ry="2.5" stroke-width="0.85" transform="rotate(2.7 485.7 385.4)"/><ellipse cx="505.8" cy="391.4" rx="7.9" ry="2.6" stroke-width="0.87" transform="rotate(3.2 505.8 391.4)"/><ellipse cx="526.8" cy="397.6" rx="8.1" ry="2.7" stroke-width="0.89" transform="rotate(3.7 526.8 397.6)"/><ellipse cx="548.5" cy="404.1" rx="8.2" ry="2.8" stroke-width="0.91" transform="rotate(4.3 548.5 404.1)"/><ellipse cx="571.2" cy="410.9" rx="8.5" ry="2.9" stroke-width="0.94" transform="rotate(4.9 571.2 410.9)"/><ellipse cx="594.7" cy="417.9" rx="8.7" ry="3.0" stroke-width="0.96" transform="rotate(5.5 594.7 417.9)"/><ellipse cx="619.3" cy="425.2" rx="8.9" ry="3.1" stroke-width="0.99" transform="rotate(6.1 619.3 425.2)"/><ellipse cx="644.9" cy="432.8" rx="9.2" ry="3.2" stroke-width="1.02" transform="rotate(6.8 644.9 432.8)"/><ellipse cx="671.6" cy="440.8" rx="9.5" ry="3.3" stroke-width="1.05" transform="rotate(7.5 671.6 440.8)"/><ellipse cx="699.6" cy="449.1" rx="9.8" ry="3.5" stroke-width="1.09" transform="rotate(8.2 699.6 449.1)"/><ellipse cx="728.8" cy="457.8" rx="10.1" ry="3.6" stroke-width="1.12" transform="rotate(9.0 728.8 457.8)"/><ellipse cx="759.3" cy="466.9" rx="10.5" ry="3.7" stroke-width="1.16" transform="rotate(9.7 759.3 466.9)"/></g>
<path d="M-137.4 440.9L1331.5 1684.6M6.8 404.0L1321.9 1159.4M124.7 373.9L1316.9 892.4M222.9 348.8L1313.9 730.7M306.0 327.6L1312.0 622.4M-137.4 440.9L306.0 327.6M-83.1 486.8L378.7 348.9M-13.5 545.8L464.5 374.0M78.9 624.0L567.1 404.1M207.7 733.0L692.2 440.7M399.3 895.2L848.1 486.4M714.7 1162.3L1047.5 544.9M1331.5 1684.6L1312.0 622.4" stroke="#000" stroke-width="1" fill="none"/>
<polygon points="488.0,505.5 490.0,496.2 502.5,487.5 520.0,477.5 537.5,467.5 552.5,463.8 553.0,482.5 548.8,493.8 540.0,503.8 527.5,510.5 515.0,514.0 500.0,513.0 492.5,511.2" fill="#212121" stroke-linejoin="round"/>
<polyline points="496.2,508.0 499.8,500.5 506.2,502.0 503.8,508.5" fill="none" stroke="#6a6a6a" stroke-width="0.7" stroke-linejoin="round"/>
<polyline points="504.8,502.2 508.2,494.8 514.8,496.2 512.2,502.8" fill="none" stroke="#6a6a6a" stroke-width="0.7" stroke-linejoin="round"/>
<polyline points="513.2,496.5 516.8,489.0 523.2,490.5 520.8,497.0" fill="none" stroke="#6a6a6a" stroke-width="0.7" stroke-linejoin="round"/>
<polyline points="521.8,490.8 525.2,483.2 531.8,484.8 529.2,491.2" fill="none" stroke="#6a6a6a" stroke-width="0.7" stroke-linejoin="round"/>
<polyline points="530.2,485.0 533.8,477.5 540.2,479.0 537.8,485.5" fill="none" stroke="#6a6a6a" stroke-width="0.7" stroke-linejoin="round"/>
<polyline points="538.8,479.2 542.2,471.8 548.8,473.2 546.2,479.8" fill="none" stroke="#6a6a6a" stroke-width="0.7" stroke-linejoin="round"/>
<polygon points="225.0,354.0 239.0,345.0 231.0,336.0 229.0,305.0 231.0,296.0 229.0,279.0 229.0,273.5 233.0,270.0 243.0,267.8 249.0,269.0 283.5,299.0 283.5,286.0 285.5,282.5 292.0,281.0 299.5,277.5 300.5,268.8 306.3,261.3 313.0,259.0 319.0,262.0 323.3,260.5 399.0,244.0 437.0,272.0 443.0,268.0 461.0,256.0 479.5,268.0 479.0,279.0 485.8,280.0 485.8,294.5 481.0,296.5 502.3,367.4 502.3,376.7 488.8,378.0 549.5,395.5 560.0,400.0 577.5,405.0 577.5,440.0 566.0,446.0 566.0,455.0 475.0,501.0 442.5,490.0 420.0,482.0 385.0,470.0 300.0,432.0 285.0,412.0 272.0,402.0 246.9,408.0 227.5,400.0" fill="#ffffff" stroke-linejoin="round"/>
<polygon points="314.0,313.3 321.6,313.3 325.8,317.5 338.2,321.7 341.6,326.7 350.0,325.0 351.6,341.6 351.6,344.0 314.4,353.0" fill="#c91a09" stroke-linejoin="round"/>
<polyline points="314.0,322.0 330.0,318.0" fill="none" stroke="#5a0c04" stroke-width="0.7" stroke-linejoin="round"/>
<polyline points="314.0,330.0 338.0,322.0" fill="none" stroke="#5a0c04" stroke-width="0.7" stroke-linejoin="round"/>
<polyline points="314.7,367.6 341.0,357.6" fill="none" stroke="#1c1c1c" stroke-width="0.9" stroke-linejoin="round"/>
<polyline points="324.1,357.6 341.0,352.6" fill="none" stroke="#1c1c1c" stroke-width="0.9" stroke-linejoin="round"/>
<polyline points="314.1,367.5 334.9,360.8" fill="none" stroke="#1c1c1c" stroke-width="0.9" stroke-linejoin="round"/>
<polyline points="314.1,367.5 314.1,360.0" fill="none" stroke="#1c1c1c" stroke-width="0.9" stroke-linejoin="round"/>
<polyline points="335.7,370.0 335.7,360.0" fill="none" stroke="#1c1c1c" stroke-width="0.9" stroke-linejoin="round"/>
<polyline points="309.9,381.6 342.4,370.0 342.4,360.0" fill="none" stroke="#1c1c1c" stroke-width="0.9" stroke-linejoin="round"/>
<polygon points="231.3,296.4 235.0,293.9 238.8,295.1 252.6,325.2 256.4,335.9 256.4,337.5 250.1,342.5 241.3,343.8 236.3,342.5 232.5,337.5 231.0,325.2 230.5,305.2" fill="#9ba19d" stroke="#555" stroke-width="0.9" stroke-linejoin="round"/>
<ellipse cx="235.7" cy="305.2" rx="5.5" ry="7.5" fill="#9ba19d" stroke="#555" stroke-width="0.8" transform="rotate(-15 235.7 305.2)"/>
<ellipse cx="236.9" cy="305.2" rx="3.0" ry="4.5" fill="#9ba19d" stroke="#555" stroke-width="0.8" transform="rotate(-15 236.9 305.2)"/>
<ellipse cx="237.6" cy="331.5" rx="5.5" ry="7.0" fill="#9ba19d" stroke="#555" stroke-width="0.8" transform="rotate(-15 237.6 331.5)"/>
<ellipse cx="238.8" cy="331.7" rx="3.0" ry="4.3" fill="#9ba19d" stroke="#555" stroke-width="0.8" transform="rotate(-15 238.8 331.7)"/>
<polygon points="228.8,273.8 230.7,270.7 236.3,268.8 247.0,267.5 250.7,270.0 283.3,298.9 285.2,325.2 285.2,335.9 286.5,330.0 286.5,372.0 275.2,367.6 275.2,351.9 256.4,343.2 267.0,330.0 262.6,335.9 231.3,286.3 228.8,278.8" fill="#c91a09" stroke="#1c1c1c" stroke-width="0.9" stroke-linejoin="round"/>
<polygon points="240.1,269.4 245.7,268.5 249.7,272.6 249.7,280.1" fill="#9ba19d" stroke="#555" stroke-width="0.7" stroke-linejoin="round"/>
<ellipse cx="235.0" cy="280.7" rx="2.6" ry="4.3" fill="#9ba19d" stroke="#555" stroke-width="0.8" transform="rotate(-10 235.0 280.7)"/>
<polyline points="236.3,270.7 280.2,321.5" fill="none" stroke="#5a0c04" stroke-width="0.8" stroke-linejoin="round"/>
<polyline points="247.0,271.9 280.2,303.3" fill="none" stroke="#5a0c04" stroke-width="0.8" stroke-linejoin="round"/>
<polyline points="250.7,275.7 280.2,314.6" fill="none" stroke="#5a0c04" stroke-width="0.8" stroke-linejoin="round"/>
<polyline points="262.6,335.9 270.2,327.7 285.2,324.6" fill="none" stroke="#5a0c04" stroke-width="0.8" stroke-linejoin="round"/>
<polyline points="275.2,351.9 286.5,357.0" fill="none" stroke="#5a0c04" stroke-width="0.8" stroke-linejoin="round"/>
<polygon points="225.0,353.8 238.8,345.0 256.4,343.2 275.2,351.9 275.2,367.6 286.5,372.0 287.1,375.0" fill="#ffffff" stroke="#1c1c1c" stroke-width="0.9" stroke-linejoin="round"/>
<ellipse cx="247.0" cy="347.6" rx="8.5" ry="3.0" fill="#ffffff" stroke="#1c1c1c" stroke-width="0.9"/>
<ellipse cx="266.4" cy="353.6" rx="8.0" ry="3.0" fill="#ffffff" stroke="#1c1c1c" stroke-width="0.9"/>
<ellipse cx="268.3" cy="359.1" rx="8.0" ry="3.0" fill="#ffffff" stroke="#1c1c1c" stroke-width="0.9"/>
<polygon points="283.3,298.3 283.3,287.6 284.6,283.6 288.3,281.3 295.2,280.7 293.4,296.4 307.8,300.8 309.7,382.7 287.1,375.0 286.5,372.0 286.5,330.0" fill="#ffffff" stroke-linejoin="round"/>
<polyline points="285.2,335.9 283.3,298.3 283.3,287.6 284.6,283.6 288.3,281.3 295.2,280.7" fill="none" stroke="#1c1c1c" stroke-width="0.9" stroke-linejoin="round"/>
<polyline points="307.8,300.8 307.8,335.9" fill="none" stroke="#1c1c1c" stroke-width="0.9" stroke-linejoin="round"/>
<polyline points="313.4,302.0 313.4,335.9" fill="none" stroke="#1c1c1c" stroke-width="0.9" stroke-linejoin="round"/>
<polyline points="286.5,330.0 287.1,375.0" fill="none" stroke="#1c1c1c" stroke-width="0.9" stroke-linejoin="round"/>
<polyline points="308.4,330.0 309.7,382.7" fill="none" stroke="#1c1c1c" stroke-width="0.9" stroke-linejoin="round"/>
<polyline points="314.0,330.0 314.7,367.6" fill="none" stroke="#1c1c1c" stroke-width="0.9" stroke-linejoin="round"/>
<polygon points="225.0,353.8 309.7,382.7 309.7,395.2 287.1,387.7 245.7,372.0 246.3,407.7 227.5,400.2 225.0,390.2" fill="#ffffff" stroke="#1c1c1c" stroke-width="0.9" stroke-linejoin="round"/>
<polyline points="245.7,372.0 287.1,387.7" fill="none" stroke="#1c1c1c" stroke-width="0.9" stroke-linejoin="round"/>
<polygon points="246.3,372.6 287.1,387.7 287.1,400.2 282.7,410.3 271.4,391.4 246.3,397.7" fill="#ffffff" stroke="#1c1c1c" stroke-width="0.9" stroke-linejoin="round"/>
<polygon points="225.6,366.4 245.7,373.9 245.7,384.5 226.3,377.0" fill="#e2564a" stroke="#b03a30" stroke-width="0.7" stroke-linejoin="round"/>
<polyline points="226.0,371.4 245.7,379.2" fill="none" stroke="#f08a80" stroke-width="0.8" stroke-linejoin="round"/>
<polygon points="226.9,390.2 246.3,397.7 246.3,407.7 227.5,400.2" fill="#c91a09" stroke="#1c1c1c" stroke-width="0.9" stroke-linejoin="round"/>
<polygon points="246.3,397.7 271.4,391.4 273.9,391.2 283.3,410.9 277.7,410.9 271.4,402.7 247.0,408.4" fill="#c91a09" stroke="#1c1c1c" stroke-width="0.9" stroke-linejoin="round"/>
<polyline points="251.3,397.1 257.0,385.2 260.8,386.1 254.5,396.5" fill="none" stroke="#1c1c1c" stroke-width="0.9" stroke-linejoin="round"/>
<polyline points="287.1,375.0 287.1,410.3" fill="none" stroke="#1c1c1c" stroke-width="0.9" stroke-linejoin="round"/>
<polygon points="350.0,311.7 358.3,313.3 358.3,328.3 350.7,327.5" fill="#0055bf" stroke-linejoin="round"/>
<polygon points="351.5,328.0 358.3,328.3 358.3,346.6 354.0,343.3" fill="#f2cd37" stroke-linejoin="round"/>
<ellipse cx="351.6" cy="376.6" rx="7.8" ry="16.0" fill="#f2cd37"/>
<polygon points="281.7,411.4 290.0,414.5 385.5,450.9 385.5,464.8 359.6,458.1 305.6,437.4 290.0,431.1 281.7,427.0" fill="#c91a09" stroke="#1c1c1c" stroke-width="0.9" stroke-linejoin="round"/>
<polygon points="305.6,437.4 359.6,458.1 359.6,467.5 310.8,448.8 305.6,446.7" fill="#c91a09" stroke="#1c1c1c" stroke-width="0.9" stroke-linejoin="round"/>
<polyline points="310.8,439.5 310.8,448.8" fill="none" stroke="#5a0c04" stroke-width="0.7" stroke-linejoin="round"/>
<polygon points="385.5,451.9 391.9,453.9 410.7,446.4 421.4,447.7 426.4,450.2 435.2,470.2 442.5,480.0 475.0,490.0 475.0,501.7 460.3,513.2 440.0,500.0 414.6,470.0 385.5,464.4" fill="#c91a09" stroke-linejoin="round"/>
<polyline points="410.7,446.4 410.7,465.2" fill="none" stroke="#5a0c04" stroke-width="0.7" stroke-linejoin="round"/>
<polyline points="385.6,465.2 410.7,455.2 432.7,463.3" fill="none" stroke="#5a0c04" stroke-width="0.7" stroke-linejoin="round"/>
<polygon points="309.9,381.6 385.6,409.9 385.6,450.7 309.9,419.0" fill="#ffffff" stroke="#1c1c1c" stroke-width="0.9" stroke-linejoin="round"/>
<polygon points="280.0,370.8 309.9,381.6 309.9,419.0 286.7,411.6 280.0,408.2" fill="#ffffff" stroke="#1c1c1c" stroke-width="0.9" stroke-linejoin="round"/>
<ellipse cx="318.6" cy="408.6" rx="10.0" ry="5.5" fill="#ffffff" stroke="#1c1c1c" stroke-width="0.8" transform="rotate(22 318.6 408.6)"/>
<ellipse cx="316.9" cy="408.2" rx="7.0" ry="4.5" fill="#ffffff" stroke="#1c1c1c" stroke-width="0.8" transform="rotate(22 316.9 408.2)"/>
<polygon points="385.6,410.7 444.6,431.4 444.6,475.0 442.7,475.0 435.2,470.2 426.4,450.2 421.4,447.7 410.7,446.4 391.9,453.9 385.6,452.0" fill="#ffffff" stroke="#1c1c1c" stroke-width="0.9" stroke-linejoin="round"/>
<polyline points="385.6,424.5 444.6,445.8" fill="none" stroke="#1c1c1c" stroke-width="0.9" stroke-linejoin="round"/>
<polyline points="391.9,453.9 402.6,439.5 405.7,440.8 395.0,452.9" fill="none" stroke="#1c1c1c" stroke-width="0.9" stroke-linejoin="round"/>
<polygon points="385.6,410.7 444.6,431.4 470.3,440.1 495.7,429.9 502.9,428.5 440.8,407.4 440.8,396.3 440.6,395.7 406.5,416.5 358.3,398.2" fill="#ffffff" stroke-linejoin="round"/>
<polyline points="385.6,410.7 444.6,431.4 470.3,440.1" fill="none" stroke="#1c1c1c" stroke-width="0.9" stroke-linejoin="round"/>
<polyline points="444.6,431.4 462.8,422.0" fill="none" stroke="#1c1c1c" stroke-width="0.9" stroke-linejoin="round"/>
<ellipse cx="442.7" cy="413.2" rx="11.0" ry="4.3" fill="#ffffff" stroke="#1c1c1c" stroke-width="0.8"/>
<ellipse cx="473.4" cy="424.1" rx="11.0" ry="4.3" fill="#ffffff" stroke="#1c1c1c" stroke-width="0.8"/>
<polyline points="430.2,420.7 436.4,424.5 447.7,424.8 454.0,420.7" fill="none" stroke="#1c1c1c" stroke-width="0.8" stroke-linejoin="round"/>
<polyline points="460.9,431.4 467.8,435.1 479.1,434.5 485.3,430.7" fill="none" stroke="#1c1c1c" stroke-width="0.8" stroke-linejoin="round"/>
<polygon points="488.2,378.0 503.2,380.3 523.1,383.0 549.8,391.6 556.4,396.3 549.4,396.6" fill="#ffffff" stroke="#1c1c1c" stroke-width="0.8" stroke-linejoin="round"/>
<polygon points="444.6,431.4 470.3,440.1 470.3,488.0 444.6,480.0" fill="#ffffff" stroke="#1c1c1c" stroke-width="0.9" stroke-linejoin="round"/>
<rect x="354" y="328.5" width="43.5" height="27" rx="9" fill="#f2cd37"/>
<ellipse cx="388.0" cy="324.0" rx="28.0" ry="7.5" fill="#3b7fc9"/>
<polygon points="365.0,355.8 389.9,351.6 404.0,349.1 418.2,355.8 406.5,369.9 398.2,383.2 373.3,386.5 365.0,383.2" fill="#f4f4f4" stroke-linejoin="round"/>
<polygon points="379.9,355.8 394.9,351.6 397.4,363.2 383.2,364.9" fill="#f2cd37" stroke-linejoin="round"/>
<polygon points="404.0,353.3 418.2,355.8 409.9,366.6 405.7,363.2" fill="#f2cd37" stroke-linejoin="round"/>
<ellipse cx="423.5" cy="366.5" rx="27.8" ry="9.2" fill="#4a5e62" transform="rotate(-32.6 423.5 366.5)"/>
<polygon points="425.0,380.0 449.0,369.0 449.0,379.0 427.0,389.0" fill="#8fa9ad" stroke-linejoin="round"/>
<polygon points="292.1,282.0 323.0,262.0 437.0,270.0 485.8,280.0 386.5,305.0" fill="#ffffff" stroke="#1c1c1c" stroke-width="0.9" stroke-linejoin="round"/>
<polygon points="292.1,282.0 386.5,305.0 386.5,320.8 293.4,297.0" fill="#ffffff" stroke="#1c1c1c" stroke-width="0.9" stroke-linejoin="round"/>
<polygon points="386.5,305.0 485.8,280.0 485.8,294.5 386.5,320.8" fill="#ffffff" stroke="#1c1c1c" stroke-width="0.9" stroke-linejoin="round"/>
<ellipse cx="414.8" cy="285.1" rx="10.5" ry="4.2" fill="#ffffff" stroke="#1c1c1c" stroke-width="0.8"/>
<ellipse cx="437.2" cy="285.9" rx="10.5" ry="4.2" fill="#ffffff" stroke="#1c1c1c" stroke-width="0.8"/>
<ellipse cx="436.4" cy="279.6" rx="10.5" ry="4.0" fill="#ffffff" stroke="#1c1c1c" stroke-width="0.8"/>
<polyline points="321.6,282.9 339.9,279.6 359.9,284.2 339.9,287.9 321.6,282.9" fill="none" stroke="#1c1c1c" stroke-width="0.8" stroke-linejoin="round"/>
<polygon points="299.0,278.8 299.4,270.0 302.8,262.3 307.8,257.3 312.8,256.3 319.1,260.0 324.1,267.5 331.6,271.9 336.6,275.1 321.6,275.7" fill="#9ba19d" stroke-linejoin="round"/>
<polyline points="286.3,225.0 308.8,261.3" fill="none" stroke="#05131d" stroke-width="5.0" stroke-linejoin="round" stroke-linecap="round"/>
<polyline points="311.3,221.3 334.5,255.5" fill="none" stroke="#05131d" stroke-width="5.0" stroke-linejoin="round" stroke-linecap="round"/>
<ellipse cx="284.3" cy="220.0" rx="6.3" ry="6.3" fill="#05131d"/>
<ellipse cx="309.3" cy="216.3" rx="6.3" ry="6.3" fill="#05131d"/>
<polyline points="307.8,260.0 315.3,258.8 321.6,266.3 320.9,270.0 317.8,270.7 315.3,263.8" fill="none" stroke="#05131d" stroke-width="1.6" stroke-linejoin="round"/>
<ellipse cx="461.3" cy="278.6" rx="14.0" ry="4.8" fill="#eec643" stroke="#c9a227" stroke-width="0.7"/>
<polygon points="447.4,273.9 475.2,273.9 475.2,278.6 447.4,278.6" fill="#eec643" stroke-linejoin="round"/>
<ellipse cx="461.3" cy="273.0" rx="18.2" ry="6.1" fill="#ecc540" stroke="#c9a227" stroke-width="0.7"/>
<ellipse cx="461.3" cy="270.7" rx="18.2" ry="6.1" fill="#f0cd4b" stroke="#c9a227" stroke-width="0.7"/>
<ellipse cx="461.3" cy="267.9" rx="18.2" ry="6.1" fill="#f6da72" stroke="#c9a227" stroke-width="0.7"/>
<polygon points="451.3,261.4 471.3,261.4 471.3,265.6 451.3,265.6" fill="#f0cd4b" stroke-linejoin="round"/>
<ellipse cx="461.3" cy="265.6" rx="10.0" ry="4.2" fill="#f0cd4b"/>
<ellipse cx="461.3" cy="263.7" rx="10.0" ry="4.2" fill="#f0cd4b" stroke="#c9a227" stroke-width="0.6"/>
<ellipse cx="461.3" cy="261.4" rx="10.0" ry="4.2" fill="#f3d45e" stroke="#c9a227" stroke-width="0.7"/>
<polygon points="323.3,261.0 398.9,244.0 441.7,276.3 396.5,287.6 369.8,294.2 361.5,291.7" fill="#b9e5eb" stroke="#86c3cc" stroke-width="0.8" stroke-linejoin="round"/>
<polygon points="323.3,261.0 338.2,256.8 347.4,264.3 333.6,268.9" fill="#9fd3da" stroke-linejoin="round"/>
<polyline points="333.6,268.9 404.8,248.5" fill="none" stroke="#8ecdd6" stroke-width="0.7" stroke-linejoin="round"/>
<polyline points="339.3,273.5 411.4,253.5" fill="none" stroke="#8ecdd6" stroke-width="0.7" stroke-linejoin="round"/>
<polyline points="345.1,278.1 418.1,258.5" fill="none" stroke="#8ecdd6" stroke-width="0.7" stroke-linejoin="round"/>
<polyline points="350.8,282.7 424.7,263.4" fill="none" stroke="#8ecdd6" stroke-width="0.7" stroke-linejoin="round"/>
<polyline points="356.5,287.2 431.4,268.4" fill="none" stroke="#8ecdd6" stroke-width="0.7" stroke-linejoin="round"/>
<polyline points="338.2,256.8 376.5,287.6" fill="none" stroke="#8ecdd6" stroke-width="0.7" stroke-linejoin="round"/>
<ellipse cx="385.8" cy="297.3" rx="15.0" ry="5.2" fill="#eec643" stroke="#c9a227" stroke-width="0.7"/>
<polygon points="370.8,292.3 400.8,292.3 400.8,297.3 370.8,297.3" fill="#eec643" stroke-linejoin="round"/>
<ellipse cx="385.8" cy="291.3" rx="19.6" ry="6.6" fill="#ecc540" stroke="#c9a227" stroke-width="0.7"/>
<ellipse cx="385.8" cy="288.8" rx="19.6" ry="6.6" fill="#f0cd4b" stroke="#c9a227" stroke-width="0.7"/>
<ellipse cx="385.8" cy="285.8" rx="19.6" ry="6.6" fill="#f6da72" stroke="#c9a227" stroke-width="0.7"/>
<polygon points="375.0,278.8 396.6,278.8 396.6,283.3 375.0,283.3" fill="#f0cd4b" stroke-linejoin="round"/>
<ellipse cx="385.8" cy="283.3" rx="10.8" ry="4.5" fill="#f0cd4b"/>
<ellipse cx="385.8" cy="281.3" rx="10.8" ry="4.5" fill="#f0cd4b" stroke="#c9a227" stroke-width="0.6"/>
<ellipse cx="385.8" cy="278.8" rx="10.8" ry="4.5" fill="#f3d45e" stroke="#c9a227" stroke-width="0.7"/>
<polygon points="358.3,313.3 386.5,320.8 479.0,297.7 502.3,367.4 502.3,376.7 489.0,379.0 440.6,395.7 428.2,414.8 406.5,416.5 358.3,398.2" fill="#9fe0ea" fill-opacity="0.62" stroke="#8fd0d8" stroke-width="0.7" stroke-linejoin="round"/>
<polygon points="455.0,303.5 479.0,297.7 502.3,367.4 502.3,376.7 489.0,379.0 470.0,372.0 456.0,360.0" fill="#9fdde6" fill-opacity="0.3" stroke-linejoin="round"/>
<ellipse cx="423.5" cy="366.5" rx="22.0" ry="5.6" fill="none" stroke="#a9cfd6" stroke-width="0.7" transform="rotate(-32.6 423.5 366.5)"/>
<polyline points="410.0,374.0 430.0,357.0" fill="none" stroke="#a9cfd6" stroke-width="0.7" stroke-linejoin="round"/>
<polyline points="358.3,398.2 358.3,320.0" fill="none" stroke="#8fd0d8" stroke-width="0.8" stroke-linejoin="round"/>
<polyline points="365.0,383.2 365.0,330.0" fill="none" stroke="#a5d8de" stroke-width="0.7" stroke-linejoin="round"/>
<polyline points="369.9,393.2 406.5,406.5 446.5,389.9 494.7,371.6" fill="none" stroke="#a5d8de" stroke-width="0.7" stroke-linejoin="round"/>
<polyline points="365.0,383.2 406.5,398.2 448.1,383.2 489.7,368.2" fill="none" stroke="#a5d8de" stroke-width="0.7" stroke-linejoin="round"/>
<ellipse cx="413.2" cy="403.2" rx="10.0" ry="4.0" fill="#c8eef2" stroke="#9ccfd6" stroke-width="0.7"/>
<ellipse cx="382.4" cy="393.2" rx="10.0" ry="4.0" fill="#c8eef2" stroke="#9ccfd6" stroke-width="0.7"/>
<polyline points="377.4,368.2 383.2,365.7 396.6,366.6 398.2,369.9 397.4,381.5 379.1,384.0 377.4,368.2" fill="none" stroke="#9ccfd6" stroke-width="0.8" stroke-linejoin="round"/>
<polyline points="386.6,340.0 391.6,341.3 394.9,339.6" fill="none" stroke="#8fb3b8" stroke-width="0.9" stroke-linejoin="round"/>
<polygon points="453.3,411.6 493.2,425.7 502.9,428.5 502.9,418.2 453.3,403.3" fill="#3a0a05" stroke-linejoin="round"/>
<polygon points="440.8,396.3 488.2,378.0 549.4,396.6 502.9,416.6" fill="#c91a09" stroke="#1c1c1c" stroke-width="0.9" stroke-linejoin="round"/>
<polygon points="440.8,396.3 502.9,416.6 502.9,428.5 440.8,407.4" fill="#c91a09" stroke="#1c1c1c" stroke-width="0.9" stroke-linejoin="round"/>
<polygon points="502.9,416.6 549.4,396.6 549.4,409.1 502.9,428.5" fill="#c91a09" stroke="#1c1c1c" stroke-width="0.9" stroke-linejoin="round"/>
<polygon points="502.9,428.5 549.4,409.1 546.4,417.4 546.4,449.8 509.0,469.8 508.2,436.5" fill="#05131d" stroke-linejoin="round"/>
<polyline points="509.8,431.5 544.8,417.4" fill="none" stroke="#5b6b78" stroke-width="0.7" stroke-linejoin="round"/>
<polyline points="509.8,443.2 544.8,428.2" fill="none" stroke="#5b6b78" stroke-width="0.7" stroke-linejoin="round"/>
<polyline points="509.8,448.2 544.8,434.0" fill="none" stroke="#5b6b78" stroke-width="0.7" stroke-linejoin="round"/>
<polyline points="509.8,456.5 545.6,439.9" fill="none" stroke="#5b6b78" stroke-width="0.7" stroke-linejoin="round"/>
<polyline points="509.8,463.1 545.6,445.7" fill="none" stroke="#5b6b78" stroke-width="0.7" stroke-linejoin="round"/>
<polyline points="513.2,432.4 513.2,441.5 528.1,435.7 528.1,425.7" fill="none" stroke="#5b6b78" stroke-width="0.7" stroke-linejoin="round"/>
<polyline points="529.8,424.9 529.8,434.9 539.8,430.7 539.8,419.9" fill="none" stroke="#5b6b78" stroke-width="0.7" stroke-linejoin="round"/>
<polygon points="442.5,480.0 475.0,490.0 475.0,501.7 442.5,490.5" fill="#c91a09" stroke="#1c1c1c" stroke-width="0.9" stroke-linejoin="round"/>
<polygon points="475.0,490.0 566.5,442.5 566.5,455.0 475.0,501.7" fill="#c91a09" stroke="#1c1c1c" stroke-width="0.9" stroke-linejoin="round"/>
<polygon points="469.1,440.7 495.7,429.9 508.2,434.0 480.7,443.2" fill="#f8e08a" stroke="#c19a22" stroke-width="0.7" stroke-linejoin="round"/>
<polygon points="469.1,440.7 480.7,443.2 481.6,484.8 469.1,479.8" fill="#e9c23c" stroke="#c19a22" stroke-width="0.7" stroke-linejoin="round"/>
<polygon points="480.7,443.2 508.2,434.0 509.0,449.8 507.8,471.5 481.6,484.8" fill="#f3d257" stroke="#c19a22" stroke-width="0.7" stroke-linejoin="round"/>
<ellipse cx="488.2" cy="457.3" rx="6.5" ry="12.0" fill="#f0cd4b" stroke="#c19a22" stroke-width="0.7" transform="rotate(8 488.2 457.3)"/>
<ellipse cx="490.2" cy="456.8" rx="4.5" ry="9.0" fill="#f5d970" stroke="#c19a22" stroke-width="0.7" transform="rotate(8 490.2 456.8)"/>
<ellipse cx="501.9" cy="459.8" rx="7.0" ry="12.5" fill="#f0cd4b" stroke="#c19a22" stroke-width="0.7" transform="rotate(8 501.9 459.8)"/>
<ellipse cx="504.0" cy="459.3" rx="5.0" ry="10.0" fill="#f6dc78" stroke="#c19a22" stroke-width="0.7" transform="rotate(8 504.0 459.3)"/>
<polygon points="544.8,408.3 563.1,399.1 576.4,402.4 558.1,411.6" fill="#f8e08a" stroke="#c19a22" stroke-width="0.7" stroke-linejoin="round"/>
<polygon points="544.8,408.3 558.1,411.6 558.9,444.9 553.1,447.3 544.8,444.9" fill="#e9c23c" stroke="#c19a22" stroke-width="0.7" stroke-linejoin="round"/>
<polygon points="558.1,411.6 576.4,402.4 577.4,424.9 574.7,436.5 558.9,444.9" fill="#f3d257" stroke="#c19a22" stroke-width="0.7" stroke-linejoin="round"/>
<ellipse cx="561.4" cy="424.9" rx="5.5" ry="11.0" fill="#f0cd4b" stroke="#c19a22" stroke-width="0.7" transform="rotate(8 561.4 424.9)"/>
<ellipse cx="571.4" cy="423.2" rx="6.0" ry="11.0" fill="#f0cd4b" stroke="#c19a22" stroke-width="0.7" transform="rotate(8 571.4 423.2)"/>
<ellipse cx="573.0" cy="422.9" rx="4.0" ry="8.5" fill="#f6dc78" stroke="#c19a22" stroke-width="0.7" transform="rotate(8 573.0 422.9)"/>
<polyline points="564.7,403.3 576.0,405.8" fill="none" stroke="#3a2a00" stroke-width="1.4" stroke-linejoin="round"/>
<polygon points="229.9,451.3 230.0,448.1 230.2,444.8 230.6,441.6 231.1,438.6 231.9,435.6 232.8,432.7 233.8,430.1 235.0,427.5 236.4,425.2 237.8,423.1 239.4,421.2 241.1,419.6 242.9,418.2 244.8,417.1 246.7,416.2 248.7,415.6 275.1,408.1 277.2,407.9 279.2,407.9 281.2,408.1 283.3,408.7 285.3,409.6 287.2,410.7 289.1,412.1 291.0,413.7 292.7,415.6 294.4,417.7 295.9,420.1 297.3,422.6 298.6,425.3 299.7,428.1 300.7,431.1 301.6,434.2 302.2,437.4 302.7,440.6 303.0,443.9 303.2,447.2 303.1,450.4 302.9,453.7 302.5,456.9 302.0,459.9 301.2,462.9 300.3,465.8 299.3,468.4 298.1,471.0 296.7,473.3 295.3,475.4 293.7,477.3 292.0,478.9 290.2,480.3 288.4,481.4 286.4,482.3 284.4,482.9 257.9,490.4 255.9,490.6 253.9,490.6 251.9,490.4 249.8,489.8 247.8,488.9 245.9,487.8 244.0,486.4 242.1,484.8 240.4,482.9 238.7,480.8 237.2,478.4 235.8,475.9 234.5,473.2 233.4,470.4 232.4,467.4 231.6,464.3 230.9,461.1 230.4,457.9 230.1,454.6" fill="#212121" stroke-linejoin="round"/>
<polygon points="301.7,449.3 304.8,450.5 304.4,456.2 301.2,455.5 300.5,459.4 303.3,462.1 301.8,467.2 298.9,465.0 297.5,468.4 299.7,472.2 297.3,476.3 294.8,472.8 292.8,475.3 294.3,480.0 291.3,482.6 289.5,478.2 287.1,479.6 287.7,484.6 284.2,485.7 283.2,480.7 280.6,480.8 280.3,485.8 276.7,485.1 276.7,480.1 274.1,478.9 272.9,483.5 269.5,481.1 270.4,476.3 268.1,474.1 266.1,477.7 263.2,473.9 265.0,469.9 263.2,466.7 260.5,469.1 258.4,464.2 260.9,461.3 259.7,457.4 256.7,458.4 255.5,452.8 258.5,451.2 258.0,447.0 254.9,446.5 254.8,440.7 257.9,440.7 258.3,436.5 255.3,434.6 256.2,429.1 259.3,430.6 260.4,426.9 257.9,423.6 259.8,419.0 262.5,421.8 264.3,418.8 262.4,414.6 265.1,411.2 267.3,415.1 269.5,413.2 268.5,408.3 271.8,406.4 273.2,411.1 275.7,410.4 275.6,405.3 279.1,405.1 279.6,410.2 282.2,410.7 283.0,405.9 286.6,407.5 286.1,412.4 288.6,414.2 290.2,410.0 293.4,413.1 292.0,417.6 294.1,420.4 296.5,417.3 299.0,421.7 296.8,425.2 298.4,428.8 301.2,427.1 302.9,432.4 300.1,434.6 301.0,438.7 304.1,438.5 304.7,444.2 301.7,445.0" fill="#212121" stroke-linejoin="round"/>
<polygon points="288.3,447.7 291.5,448.2 291.6,454.0 288.4,454.1 288.1,458.2 291.1,460.2 290.1,465.6 287.0,464.2 285.9,467.9 288.5,471.2 286.5,475.8 283.8,472.9 282.1,475.9 284.0,480.2 281.2,483.6 279.0,479.6 276.8,481.6 277.9,486.5 274.6,488.3 273.2,483.6 270.6,484.4 270.8,489.4 267.2,489.6 266.7,484.5 264.1,484.0 263.3,488.8 259.8,487.3 260.3,482.3 257.8,480.6 256.1,484.7 253.0,481.6 254.3,477.2 252.3,474.4 249.9,477.5 247.4,473.0 249.5,469.5 248.0,465.9 245.1,467.7 243.5,462.4 246.2,460.1 245.4,456.0 242.2,456.3 241.6,450.5 244.7,449.7 244.6,445.5 241.5,444.2 242.0,438.6 245.1,439.3 245.8,435.3 243.0,432.6 244.5,427.5 247.5,429.7 248.9,426.3 246.6,422.5 249.0,418.5 251.5,421.9 253.5,419.4 252.0,414.8 255.1,412.1 256.9,416.5 259.3,415.2 258.7,410.1 262.2,409.1 263.1,414.0 265.7,413.9 266.0,408.9 269.6,409.6 269.6,414.7 272.2,415.8 273.5,411.3 276.8,413.7 275.9,418.4 278.2,420.7 280.2,417.0 283.1,420.9 281.3,424.9 283.2,428.1 285.8,425.7 287.9,430.6 285.4,433.5 286.6,437.4 289.7,436.4 290.8,442.0 287.9,443.5" fill="#212121" stroke-linejoin="round"/>
<polygon points="275.2,456.8 278.3,458.0 277.9,463.7 274.7,463.0 274.0,466.9 276.8,469.6 275.3,474.7 272.4,472.5 271.0,475.9 273.2,479.7 270.8,483.8 268.3,480.3 266.3,482.8 267.8,487.5 264.8,490.1 263.0,485.7 260.6,487.1 261.2,492.1 257.7,493.2 256.7,488.2 254.1,488.3 253.8,493.3 250.2,492.6 250.2,487.6 247.6,486.4 246.4,491.0 243.0,488.6 243.9,483.8 241.6,481.6 239.6,485.2 236.7,481.4 238.5,477.4 236.7,474.2 234.0,476.6 231.9,471.7 234.4,468.8 233.2,464.9 230.2,465.9 229.0,460.3 232.0,458.7 231.5,454.5 228.4,454.0 228.3,448.2 231.4,448.2 231.8,444.0 228.8,442.1 229.7,436.6 232.8,438.1 233.9,434.4 231.4,431.1 233.3,426.5 236.0,429.3 237.8,426.3 235.9,422.1 238.6,418.7 240.8,422.6 243.0,420.7 242.0,415.8 245.3,413.9 246.7,418.6 249.2,417.9 249.1,412.8 252.6,412.6 253.1,417.7 255.7,418.2 256.5,413.4 260.1,415.0 259.6,419.9 262.1,421.7 263.7,417.5 266.9,420.6 265.5,425.1 267.6,427.9 270.0,424.8 272.5,429.2 270.3,432.7 271.9,436.3 274.7,434.6 276.4,439.9 273.6,442.1 274.5,446.2 277.6,446.0 278.2,451.7 275.2,452.5" fill="#212121" stroke-linejoin="round"/>
<polyline points="278.3,458.3 290.2,454.9" fill="none" stroke="#777" stroke-width="0.6" stroke-linejoin="round"/>
<polyline points="277.9,463.5 289.8,460.1" fill="none" stroke="#777" stroke-width="0.6" stroke-linejoin="round"/>
<polyline points="278.3,458.3 277.9,463.5" fill="none" stroke="#777" stroke-width="0.6" stroke-linejoin="round"/>
<polyline points="290.2,454.9 289.8,460.1" fill="none" stroke="#777" stroke-width="0.6" stroke-linejoin="round"/>
<polyline points="291.3,448.5 304.5,444.7" fill="none" stroke="#777" stroke-width="0.6" stroke-linejoin="round"/>
<polyline points="291.3,453.7 304.6,450.0" fill="none" stroke="#777" stroke-width="0.6" stroke-linejoin="round"/>
<polyline points="291.3,448.5 291.3,453.7" fill="none" stroke="#777" stroke-width="0.6" stroke-linejoin="round"/>
<polyline points="276.8,469.8 288.7,466.5" fill="none" stroke="#777" stroke-width="0.6" stroke-linejoin="round"/>
<polyline points="275.4,474.5 287.3,471.1" fill="none" stroke="#777" stroke-width="0.6" stroke-linejoin="round"/>
<polyline points="276.8,469.8 275.4,474.5" fill="none" stroke="#777" stroke-width="0.6" stroke-linejoin="round"/>
<polyline points="288.7,466.5 287.3,471.1" fill="none" stroke="#777" stroke-width="0.6" stroke-linejoin="round"/>
<polyline points="290.8,460.3 304.1,456.6" fill="none" stroke="#777" stroke-width="0.6" stroke-linejoin="round"/>
<polyline points="289.9,465.3 303.2,461.5" fill="none" stroke="#777" stroke-width="0.6" stroke-linejoin="round"/>
<polyline points="290.8,460.3 289.9,465.3" fill="none" stroke="#777" stroke-width="0.6" stroke-linejoin="round"/>
<polyline points="273.1,479.9 285.0,476.5" fill="none" stroke="#777" stroke-width="0.6" stroke-linejoin="round"/>
<polyline points="270.9,483.6 282.8,480.3" fill="none" stroke="#777" stroke-width="0.6" stroke-linejoin="round"/>
<polyline points="273.1,479.9 270.9,483.6" fill="none" stroke="#777" stroke-width="0.6" stroke-linejoin="round"/>
<polyline points="285.0,476.5 282.8,480.3" fill="none" stroke="#777" stroke-width="0.6" stroke-linejoin="round"/>
<polyline points="288.2,471.1 301.5,467.4" fill="none" stroke="#777" stroke-width="0.6" stroke-linejoin="round"/>
<polyline points="286.4,475.4 299.7,471.6" fill="none" stroke="#777" stroke-width="0.6" stroke-linejoin="round"/>
<polyline points="288.2,471.1 286.4,475.4" fill="none" stroke="#777" stroke-width="0.6" stroke-linejoin="round"/>
<polyline points="267.7,487.6 279.6,484.2" fill="none" stroke="#777" stroke-width="0.6" stroke-linejoin="round"/>
<polyline points="264.9,490.0 276.8,486.7" fill="none" stroke="#777" stroke-width="0.6" stroke-linejoin="round"/>
<polyline points="267.7,487.6 264.9,490.0" fill="none" stroke="#777" stroke-width="0.6" stroke-linejoin="round"/>
<polyline points="279.6,484.2 276.8,486.7" fill="none" stroke="#777" stroke-width="0.6" stroke-linejoin="round"/>
<polyline points="283.7,480.0 296.9,476.3" fill="none" stroke="#777" stroke-width="0.6" stroke-linejoin="round"/>
<polyline points="281.2,483.1 294.4,479.4" fill="none" stroke="#777" stroke-width="0.6" stroke-linejoin="round"/>
<polyline points="283.7,480.0 281.2,483.1" fill="none" stroke="#777" stroke-width="0.6" stroke-linejoin="round"/>
<polyline points="261.0,492.2 272.9,488.8" fill="none" stroke="#777" stroke-width="0.6" stroke-linejoin="round"/>
<polyline points="257.8,493.1 269.8,489.8" fill="none" stroke="#777" stroke-width="0.6" stroke-linejoin="round"/>
<polyline points="261.0,492.2 257.8,493.1" fill="none" stroke="#777" stroke-width="0.6" stroke-linejoin="round"/>
<polyline points="272.9,488.8 269.8,489.8" fill="none" stroke="#777" stroke-width="0.6" stroke-linejoin="round"/>
<polyline points="277.6,486.2 290.9,482.5" fill="none" stroke="#777" stroke-width="0.6" stroke-linejoin="round"/>
<polyline points="274.6,487.9 287.9,484.1" fill="none" stroke="#777" stroke-width="0.6" stroke-linejoin="round"/>
<polyline points="277.6,486.2 274.6,487.9" fill="none" stroke="#777" stroke-width="0.6" stroke-linejoin="round"/>
<polyline points="242.1,415.7 254.0,412.3" fill="none" stroke="#777" stroke-width="0.6" stroke-linejoin="round"/>
<polyline points="245.1,414.0 257.1,410.6" fill="none" stroke="#777" stroke-width="0.6" stroke-linejoin="round"/>
<polyline points="242.1,415.7 245.1,414.0" fill="none" stroke="#777" stroke-width="0.6" stroke-linejoin="round"/>
<polyline points="254.0,412.3 257.1,410.6" fill="none" stroke="#777" stroke-width="0.6" stroke-linejoin="round"/>
<polyline points="252.3,415.0 265.5,411.2" fill="none" stroke="#777" stroke-width="0.6" stroke-linejoin="round"/>
<polyline points="255.1,412.6 268.3,408.8" fill="none" stroke="#777" stroke-width="0.6" stroke-linejoin="round"/>
<polyline points="252.3,415.0 255.1,412.6" fill="none" stroke="#777" stroke-width="0.6" stroke-linejoin="round"/>
<polyline points="249.2,412.8 261.1,409.4" fill="none" stroke="#777" stroke-width="0.6" stroke-linejoin="round"/>
<polyline points="252.5,412.6 264.4,409.3" fill="none" stroke="#777" stroke-width="0.6" stroke-linejoin="round"/>
<polyline points="249.2,412.8 252.5,412.6" fill="none" stroke="#777" stroke-width="0.6" stroke-linejoin="round"/>
<polyline points="261.1,409.4 264.4,409.3" fill="none" stroke="#777" stroke-width="0.6" stroke-linejoin="round"/>
<polyline points="258.9,410.4 272.2,406.7" fill="none" stroke="#777" stroke-width="0.6" stroke-linejoin="round"/>
<polyline points="262.1,409.5 275.3,405.7" fill="none" stroke="#777" stroke-width="0.6" stroke-linejoin="round"/>
<polyline points="258.9,410.4 262.1,409.5" fill="none" stroke="#777" stroke-width="0.6" stroke-linejoin="round"/>
<polyline points="256.7,413.5 268.6,410.1" fill="none" stroke="#777" stroke-width="0.6" stroke-linejoin="round"/>
<polyline points="259.9,414.9 271.8,411.5" fill="none" stroke="#777" stroke-width="0.6" stroke-linejoin="round"/>
<polyline points="256.7,413.5 259.9,414.9" fill="none" stroke="#777" stroke-width="0.6" stroke-linejoin="round"/>
<polyline points="268.6,410.1 271.8,411.5" fill="none" stroke="#777" stroke-width="0.6" stroke-linejoin="round"/>
<polyline points="266.2,409.3 279.4,405.6" fill="none" stroke="#777" stroke-width="0.6" stroke-linejoin="round"/>
<polyline points="269.5,409.9 282.7,406.2" fill="none" stroke="#777" stroke-width="0.6" stroke-linejoin="round"/>
<polyline points="266.2,409.3 269.5,409.9" fill="none" stroke="#777" stroke-width="0.6" stroke-linejoin="round"/>
<polyline points="263.9,417.6 275.8,414.3" fill="none" stroke="#777" stroke-width="0.6" stroke-linejoin="round"/>
<polyline points="266.7,420.5 278.7,417.1" fill="none" stroke="#777" stroke-width="0.6" stroke-linejoin="round"/>
<polyline points="263.9,417.6 266.7,420.5" fill="none" stroke="#777" stroke-width="0.6" stroke-linejoin="round"/>
<polyline points="275.8,414.3 278.7,417.1" fill="none" stroke="#777" stroke-width="0.6" stroke-linejoin="round"/>
<polyline points="273.5,411.7 286.8,408.0" fill="none" stroke="#777" stroke-width="0.6" stroke-linejoin="round"/>
<polyline points="276.6,413.9 289.8,410.1" fill="none" stroke="#777" stroke-width="0.6" stroke-linejoin="round"/>
<polyline points="273.5,411.7 276.6,413.9" fill="none" stroke="#777" stroke-width="0.6" stroke-linejoin="round"/>
<polyline points="270.1,425.0 282.0,421.6" fill="none" stroke="#777" stroke-width="0.6" stroke-linejoin="round"/>
<polyline points="272.4,429.0 284.3,425.6" fill="none" stroke="#777" stroke-width="0.6" stroke-linejoin="round"/>
<polyline points="270.1,425.0 272.4,429.0" fill="none" stroke="#777" stroke-width="0.6" stroke-linejoin="round"/>
<polyline points="282.0,421.6 284.3,425.6" fill="none" stroke="#777" stroke-width="0.6" stroke-linejoin="round"/>
<polyline points="280.2,417.5 293.5,413.7" fill="none" stroke="#777" stroke-width="0.6" stroke-linejoin="round"/>
<polyline points="282.8,421.0 296.1,417.2" fill="none" stroke="#777" stroke-width="0.6" stroke-linejoin="round"/>
<polyline points="280.2,417.5 282.8,421.0" fill="none" stroke="#777" stroke-width="0.6" stroke-linejoin="round"/>
<polyline points="274.8,434.8 286.7,431.4" fill="none" stroke="#777" stroke-width="0.6" stroke-linejoin="round"/>
<polyline points="276.3,439.7 288.2,436.3" fill="none" stroke="#777" stroke-width="0.6" stroke-linejoin="round"/>
<polyline points="274.8,434.8 276.3,439.7" fill="none" stroke="#777" stroke-width="0.6" stroke-linejoin="round"/>
<polyline points="286.7,431.4 288.2,436.3" fill="none" stroke="#777" stroke-width="0.6" stroke-linejoin="round"/>
<polyline points="285.7,426.1 299.0,422.3" fill="none" stroke="#777" stroke-width="0.6" stroke-linejoin="round"/>
<polyline points="287.6,430.6 300.9,426.8" fill="none" stroke="#777" stroke-width="0.6" stroke-linejoin="round"/>
<polyline points="285.7,426.1 287.6,430.6" fill="none" stroke="#777" stroke-width="0.6" stroke-linejoin="round"/>
<polyline points="277.6,446.2 289.6,442.8" fill="none" stroke="#777" stroke-width="0.6" stroke-linejoin="round"/>
<polyline points="278.2,451.5 290.1,448.1" fill="none" stroke="#777" stroke-width="0.6" stroke-linejoin="round"/>
<polyline points="277.6,446.2 278.2,451.5" fill="none" stroke="#777" stroke-width="0.6" stroke-linejoin="round"/>
<polyline points="289.6,442.8 290.1,448.1" fill="none" stroke="#777" stroke-width="0.6" stroke-linejoin="round"/>
<polyline points="289.5,436.7 302.8,433.0" fill="none" stroke="#777" stroke-width="0.6" stroke-linejoin="round"/>
<polyline points="290.6,441.8 303.8,438.1" fill="none" stroke="#777" stroke-width="0.6" stroke-linejoin="round"/>
<polyline points="289.5,436.7 290.6,441.8" fill="none" stroke="#777" stroke-width="0.6" stroke-linejoin="round"/>
<ellipse cx="253.8" cy="453.0" rx="14.9" ry="24.1" fill="none" stroke="#777" stroke-width="0.7" transform="rotate(-4 253.3 453.0)"/>
<ellipse cx="257.0" cy="451.9" rx="10.1" ry="16.3" fill="#fff" stroke="#222" stroke-width="0.8" transform="rotate(-4 257.0 451.9)"/>
<ellipse cx="262.5" cy="455.2" rx="3.0" ry="3.3" fill="#fff" stroke="#333" stroke-width="0.7" transform="rotate(110 262.5 455.2)"/>
<ellipse cx="256.8" cy="461.4" rx="3.0" ry="3.3" fill="#fff" stroke="#333" stroke-width="0.7" transform="rotate(182 256.8 461.4)"/>
<ellipse cx="251.4" cy="454.6" rx="3.0" ry="3.3" fill="#fff" stroke="#333" stroke-width="0.7" transform="rotate(254 251.4 454.6)"/>
<ellipse cx="253.7" cy="444.1" rx="3.0" ry="3.3" fill="#fff" stroke="#333" stroke-width="0.7" transform="rotate(326 253.7 444.1)"/>
<ellipse cx="260.6" cy="444.5" rx="3.0" ry="3.3" fill="#fff" stroke="#333" stroke-width="0.7" transform="rotate(398 260.6 444.5)"/>
<polyline points="362.5,490.1 362.5,462.5 370.7,459.4" fill="none" stroke="#6a5ee6" stroke-width="1.3" stroke-linejoin="round"/>
<polyline points="362.5,462.5 383.8,472.0" fill="none" stroke="#6a5ee6" stroke-width="1.3" stroke-linejoin="round"/>
<polyline points="395.8,454.4 410.2,459.4 410.2,465.0" fill="none" stroke="#6a5ee6" stroke-width="1.3" stroke-linejoin="round"/>
<polyline points="410.2,459.4 418.0,456.5" fill="none" stroke="#6a5ee6" stroke-width="1.3" stroke-linejoin="round"/>
<polyline points="363.4,520.9 363.4,546.0 384.2,557.8" fill="none" stroke="#6a5ee6" stroke-width="1.3" stroke-linejoin="round"/>
<polyline points="363.4,546.0 369.6,543.2" fill="none" stroke="#6a5ee6" stroke-width="1.3" stroke-linejoin="round"/>
<polyline points="458.1,540.4 458.1,566.9 451.1,571.7" fill="none" stroke="#6a5ee6" stroke-width="1.3" stroke-linejoin="round"/>
<polyline points="458.1,566.9 437.2,556.4" fill="none" stroke="#6a5ee6" stroke-width="1.3" stroke-linejoin="round"/>
<polyline points="432.3,555.7 432.3,582.2 410.0,571.0" fill="none" stroke="#6a5ee6" stroke-width="1.3" stroke-linejoin="round"/>
<polyline points="432.3,582.2 438.6,578.7" fill="none" stroke="#6a5ee6" stroke-width="1.3" stroke-linejoin="round"/>
<polyline points="459.7,497.6 459.7,509.6" fill="none" stroke="#6a5ee6" stroke-width="1.3" stroke-linejoin="round"/>
<polygon points="366.3,520.2 366.5,516.5 366.9,512.9 367.6,509.3 368.5,505.8 369.6,502.4 371.1,499.2 372.7,496.1 374.6,493.3 376.6,490.6 378.9,488.2 381.3,486.1 383.9,484.2 386.6,482.6 408.1,470.6 410.9,469.2 413.8,468.2 416.8,467.5 419.8,467.2 422.9,467.1 425.9,467.4 429.0,468.0 431.9,468.9 434.8,470.1 437.6,471.6 440.4,473.4 442.9,475.5 445.3,477.8 447.6,480.4 449.6,483.2 451.5,486.2 453.1,489.4 454.5,492.7 455.7,496.2 456.6,499.8 457.2,503.4 457.6,507.1 457.8,510.8 457.6,514.5 457.2,518.1 456.6,521.7 455.6,525.2 454.4,528.6 453.0,531.8 451.4,534.9 449.5,537.7 447.5,540.4 445.2,542.8 442.8,544.9 440.2,546.8 437.5,548.5 416.0,560.5 413.2,561.8 410.3,562.8 407.3,563.5 404.3,563.8 401.2,563.9 398.2,563.6 395.1,563.0 392.2,562.1 389.3,560.9 386.4,559.4 383.7,557.6 381.2,555.5 378.8,553.2 376.5,550.6 374.5,547.8 372.6,544.8 371.0,541.6 369.6,538.3 368.4,534.8 367.5,531.2 366.9,527.6 366.5,523.9" fill="#41378a" stroke-linejoin="round"/>
<polygon points="455.5,513.2 460.2,514.5 459.3,520.9 454.6,520.2 453.4,524.7 457.6,527.6 455.2,533.4 450.9,531.0 448.6,534.8 451.9,539.1 448.2,543.7 444.6,539.9 441.5,542.8 443.7,547.9 439.0,551.0 436.4,546.1 432.8,547.7 433.6,553.4 428.3,554.6 427.0,549.1 423.1,549.3 422.5,554.9 417.1,554.2 417.3,548.5 413.4,547.3 411.5,552.4 406.5,549.9 408.0,544.5 404.6,542.0 401.4,546.1 397.3,541.9 400.0,537.4 397.4,533.8 393.3,536.6 390.3,531.1 394.1,527.7 392.4,523.4 387.8,524.6 386.2,518.3 390.7,516.5 390.1,511.8 385.4,511.3 385.4,504.8 390.1,504.7 390.8,500.0 386.3,497.8 387.9,491.7 392.5,493.2 394.2,489.0 390.5,485.4 393.5,480.1 397.6,483.3 400.3,479.9 397.5,475.1 401.7,471.2 404.9,475.6 408.3,473.4 406.8,467.9 411.8,465.7 413.8,471.0 417.6,470.1 417.5,464.3 422.9,464.1 423.5,469.8 427.4,470.3 428.7,464.8 433.9,466.5 433.1,472.1 436.7,474.0 439.3,469.3 444.0,472.7 441.8,477.7 444.9,480.8 448.5,477.3 452.2,482.2 448.8,486.2 451.0,490.2 455.4,488.2 457.7,494.1 453.6,496.7 454.7,501.3 459.4,501.0 460.2,507.4 455.5,508.4" fill="#41378a" stroke-linejoin="round"/>
<polygon points="444.7,513.2 449.4,513.7 449.4,520.2 444.7,520.3 444.1,525.0 448.5,527.2 446.9,533.3 442.3,531.8 440.6,536.0 444.4,539.6 441.3,544.9 437.3,541.7 434.6,545.1 437.3,549.9 433.1,553.8 430.0,549.4 426.6,551.6 428.0,557.1 423.0,559.3 421.1,554.0 417.3,554.9 417.3,560.7 412.0,560.9 411.4,555.2 407.5,554.7 406.2,560.2 400.9,558.5 401.8,552.9 398.1,551.0 395.5,555.7 390.9,552.3 393.0,547.3 390.0,544.2 386.3,547.7 382.7,542.8 386.0,538.8 383.8,534.8 379.4,536.8 377.1,530.9 381.3,528.3 380.1,523.7 375.4,524.0 374.7,517.6 379.3,516.6 379.3,511.8 374.7,510.5 375.5,504.1 380.2,504.8 381.4,500.3 377.3,497.4 379.6,491.6 384.0,494.0 386.2,490.2 382.9,485.9 386.6,481.3 390.2,485.1 393.3,482.2 391.2,477.1 395.9,474.0 398.4,478.9 402.1,477.3 401.3,471.6 406.5,470.4 407.8,475.9 411.7,475.7 412.3,470.1 417.7,470.8 417.6,476.5 421.4,477.7 423.4,472.6 428.4,475.1 426.9,480.5 430.3,483.0 433.4,478.9 437.6,483.1 434.8,487.6 437.5,491.2 441.5,488.4 444.5,493.9 440.8,497.3 442.5,501.6 447.1,500.4 448.6,506.7 444.2,508.5" fill="#41378a" stroke-linejoin="round"/>
<polygon points="434.0,525.2 438.7,526.5 437.8,532.9 433.1,532.2 431.9,536.7 436.1,539.6 433.7,545.4 429.4,543.0 427.1,546.8 430.4,551.1 426.7,555.7 423.1,551.9 420.0,554.8 422.2,559.9 417.5,563.0 414.9,558.1 411.3,559.7 412.1,565.4 406.8,566.6 405.5,561.1 401.6,561.3 401.0,566.9 395.6,566.2 395.8,560.5 391.9,559.3 390.0,564.4 385.0,561.9 386.5,556.5 383.1,554.0 379.9,558.1 375.8,553.9 378.5,549.4 375.9,545.8 371.8,548.6 368.8,543.1 372.6,539.7 370.9,535.4 366.3,536.6 364.7,530.3 369.2,528.5 368.6,523.8 363.9,523.3 363.9,516.8 368.6,516.7 369.3,512.0 364.8,509.8 366.4,503.7 371.0,505.2 372.7,501.0 369.0,497.4 372.0,492.1 376.1,495.3 378.8,491.9 376.0,487.1 380.2,483.2 383.4,487.6 386.8,485.4 385.3,479.9 390.3,477.7 392.3,483.0 396.1,482.1 396.0,476.3 401.4,476.1 402.0,481.8 405.9,482.3 407.2,476.8 412.4,478.5 411.6,484.1 415.2,486.0 417.8,481.3 422.5,484.7 420.3,489.7 423.4,492.8 427.0,489.3 430.7,494.2 427.3,498.2 429.5,502.2 433.9,500.2 436.2,506.1 432.1,508.7 433.2,513.3 437.9,513.0 438.7,519.4 434.0,520.4" fill="#41378a" stroke-linejoin="round"/>
<polyline points="438.6,526.8 448.3,521.4" fill="none" stroke="#6e64e8" stroke-width="0.6" stroke-linejoin="round"/>
<polyline points="437.9,532.6 447.6,527.2" fill="none" stroke="#6e64e8" stroke-width="0.6" stroke-linejoin="round"/>
<polyline points="438.6,526.8 437.9,532.6" fill="none" stroke="#6e64e8" stroke-width="0.6" stroke-linejoin="round"/>
<polyline points="448.3,521.4 447.6,527.2" fill="none" stroke="#6e64e8" stroke-width="0.6" stroke-linejoin="round"/>
<polyline points="449.1,514.0 459.9,508.0" fill="none" stroke="#6e64e8" stroke-width="0.6" stroke-linejoin="round"/>
<polyline points="449.1,519.9 459.8,513.9" fill="none" stroke="#6e64e8" stroke-width="0.6" stroke-linejoin="round"/>
<polyline points="449.1,514.0 449.1,519.9" fill="none" stroke="#6e64e8" stroke-width="0.6" stroke-linejoin="round"/>
<polyline points="436.0,539.8 445.7,534.4" fill="none" stroke="#6e64e8" stroke-width="0.6" stroke-linejoin="round"/>
<polyline points="433.8,545.1 443.5,539.7" fill="none" stroke="#6e64e8" stroke-width="0.6" stroke-linejoin="round"/>
<polyline points="436.0,539.8 433.8,545.1" fill="none" stroke="#6e64e8" stroke-width="0.6" stroke-linejoin="round"/>
<polyline points="445.7,534.4 443.5,539.7" fill="none" stroke="#6e64e8" stroke-width="0.6" stroke-linejoin="round"/>
<polyline points="448.1,527.3 458.9,521.3" fill="none" stroke="#6e64e8" stroke-width="0.6" stroke-linejoin="round"/>
<polyline points="446.7,532.9 457.4,526.9" fill="none" stroke="#6e64e8" stroke-width="0.6" stroke-linejoin="round"/>
<polyline points="448.1,527.3 446.7,532.9" fill="none" stroke="#6e64e8" stroke-width="0.6" stroke-linejoin="round"/>
<polyline points="430.3,551.3 440.0,545.9" fill="none" stroke="#6e64e8" stroke-width="0.6" stroke-linejoin="round"/>
<polyline points="426.9,555.5 436.6,550.1" fill="none" stroke="#6e64e8" stroke-width="0.6" stroke-linejoin="round"/>
<polyline points="430.3,551.3 426.9,555.5" fill="none" stroke="#6e64e8" stroke-width="0.6" stroke-linejoin="round"/>
<polyline points="440.0,545.9 436.6,550.1" fill="none" stroke="#6e64e8" stroke-width="0.6" stroke-linejoin="round"/>
<polyline points="443.9,539.6 454.7,533.6" fill="none" stroke="#6e64e8" stroke-width="0.6" stroke-linejoin="round"/>
<polyline points="441.2,544.4 451.9,538.4" fill="none" stroke="#6e64e8" stroke-width="0.6" stroke-linejoin="round"/>
<polyline points="443.9,539.6 441.2,544.4" fill="none" stroke="#6e64e8" stroke-width="0.6" stroke-linejoin="round"/>
<polyline points="422.0,560.1 431.7,554.7" fill="none" stroke="#6e64e8" stroke-width="0.6" stroke-linejoin="round"/>
<polyline points="417.7,562.9 427.4,557.5" fill="none" stroke="#6e64e8" stroke-width="0.6" stroke-linejoin="round"/>
<polyline points="422.0,560.1 417.7,562.9" fill="none" stroke="#6e64e8" stroke-width="0.6" stroke-linejoin="round"/>
<polyline points="431.7,554.7 427.4,557.5" fill="none" stroke="#6e64e8" stroke-width="0.6" stroke-linejoin="round"/>
<polyline points="436.9,549.7 447.7,543.7" fill="none" stroke="#6e64e8" stroke-width="0.6" stroke-linejoin="round"/>
<polyline points="433.1,553.3 443.8,547.3" fill="none" stroke="#6e64e8" stroke-width="0.6" stroke-linejoin="round"/>
<polyline points="436.9,549.7 433.1,553.3" fill="none" stroke="#6e64e8" stroke-width="0.6" stroke-linejoin="round"/>
<polyline points="376.2,486.9 385.9,481.5" fill="none" stroke="#6e64e8" stroke-width="0.6" stroke-linejoin="round"/>
<polyline points="380.1,483.3 389.7,477.9" fill="none" stroke="#6e64e8" stroke-width="0.6" stroke-linejoin="round"/>
<polyline points="376.2,486.9 380.1,483.3" fill="none" stroke="#6e64e8" stroke-width="0.6" stroke-linejoin="round"/>
<polyline points="385.9,481.5 389.7,477.9" fill="none" stroke="#6e64e8" stroke-width="0.6" stroke-linejoin="round"/>
<polyline points="383.4,486.0 394.1,480.0" fill="none" stroke="#6e64e8" stroke-width="0.6" stroke-linejoin="round"/>
<polyline points="386.7,481.8 397.4,475.8" fill="none" stroke="#6e64e8" stroke-width="0.6" stroke-linejoin="round"/>
<polyline points="383.4,486.0 386.7,481.8" fill="none" stroke="#6e64e8" stroke-width="0.6" stroke-linejoin="round"/>
<polyline points="385.5,479.8 395.2,474.4" fill="none" stroke="#6e64e8" stroke-width="0.6" stroke-linejoin="round"/>
<polyline points="390.1,477.8 399.8,472.4" fill="none" stroke="#6e64e8" stroke-width="0.6" stroke-linejoin="round"/>
<polyline points="385.5,479.8 390.1,477.8" fill="none" stroke="#6e64e8" stroke-width="0.6" stroke-linejoin="round"/>
<polyline points="395.2,474.4 399.8,472.4" fill="none" stroke="#6e64e8" stroke-width="0.6" stroke-linejoin="round"/>
<polyline points="391.6,477.3 402.3,471.3" fill="none" stroke="#6e64e8" stroke-width="0.6" stroke-linejoin="round"/>
<polyline points="395.8,474.5 406.6,468.5" fill="none" stroke="#6e64e8" stroke-width="0.6" stroke-linejoin="round"/>
<polyline points="391.6,477.3 395.8,474.5" fill="none" stroke="#6e64e8" stroke-width="0.6" stroke-linejoin="round"/>
<polyline points="396.2,476.3 405.9,470.9" fill="none" stroke="#6e64e8" stroke-width="0.6" stroke-linejoin="round"/>
<polyline points="401.2,476.0 410.8,470.6" fill="none" stroke="#6e64e8" stroke-width="0.6" stroke-linejoin="round"/>
<polyline points="396.2,476.3 401.2,476.0" fill="none" stroke="#6e64e8" stroke-width="0.6" stroke-linejoin="round"/>
<polyline points="405.9,470.9 410.8,470.6" fill="none" stroke="#6e64e8" stroke-width="0.6" stroke-linejoin="round"/>
<polyline points="401.6,472.0 412.4,466.0" fill="none" stroke="#6e64e8" stroke-width="0.6" stroke-linejoin="round"/>
<polyline points="406.4,470.8 417.1,464.8" fill="none" stroke="#6e64e8" stroke-width="0.6" stroke-linejoin="round"/>
<polyline points="401.6,472.0 406.4,470.8" fill="none" stroke="#6e64e8" stroke-width="0.6" stroke-linejoin="round"/>
<polyline points="407.4,476.9 417.1,471.5" fill="none" stroke="#6e64e8" stroke-width="0.6" stroke-linejoin="round"/>
<polyline points="412.2,478.4 421.9,473.0" fill="none" stroke="#6e64e8" stroke-width="0.6" stroke-linejoin="round"/>
<polyline points="407.4,476.9 412.2,478.4" fill="none" stroke="#6e64e8" stroke-width="0.6" stroke-linejoin="round"/>
<polyline points="417.1,471.5 421.9,473.0" fill="none" stroke="#6e64e8" stroke-width="0.6" stroke-linejoin="round"/>
<polyline points="412.6,470.5 423.3,464.5" fill="none" stroke="#6e64e8" stroke-width="0.6" stroke-linejoin="round"/>
<polyline points="417.4,471.1 428.2,465.1" fill="none" stroke="#6e64e8" stroke-width="0.6" stroke-linejoin="round"/>
<polyline points="412.6,470.5 417.4,471.1" fill="none" stroke="#6e64e8" stroke-width="0.6" stroke-linejoin="round"/>
<polyline points="418.0,481.4 427.7,476.0" fill="none" stroke="#6e64e8" stroke-width="0.6" stroke-linejoin="round"/>
<polyline points="422.3,484.5 432.0,479.1" fill="none" stroke="#6e64e8" stroke-width="0.6" stroke-linejoin="round"/>
<polyline points="418.0,481.4 422.3,484.5" fill="none" stroke="#6e64e8" stroke-width="0.6" stroke-linejoin="round"/>
<polyline points="427.7,476.0 432.0,479.1" fill="none" stroke="#6e64e8" stroke-width="0.6" stroke-linejoin="round"/>
<polyline points="423.5,473.1 434.2,467.1" fill="none" stroke="#6e64e8" stroke-width="0.6" stroke-linejoin="round"/>
<polyline points="428.0,475.4 438.8,469.4" fill="none" stroke="#6e64e8" stroke-width="0.6" stroke-linejoin="round"/>
<polyline points="423.5,473.1 428.0,475.4" fill="none" stroke="#6e64e8" stroke-width="0.6" stroke-linejoin="round"/>
<polyline points="427.2,489.5 436.9,484.1" fill="none" stroke="#6e64e8" stroke-width="0.6" stroke-linejoin="round"/>
<polyline points="430.5,494.0 440.2,488.6" fill="none" stroke="#6e64e8" stroke-width="0.6" stroke-linejoin="round"/>
<polyline points="427.2,489.5 430.5,494.0" fill="none" stroke="#6e64e8" stroke-width="0.6" stroke-linejoin="round"/>
<polyline points="436.9,484.1 440.2,488.6" fill="none" stroke="#6e64e8" stroke-width="0.6" stroke-linejoin="round"/>
<polyline points="433.4,479.4 444.1,473.4" fill="none" stroke="#6e64e8" stroke-width="0.6" stroke-linejoin="round"/>
<polyline points="437.2,483.2 447.9,477.2" fill="none" stroke="#6e64e8" stroke-width="0.6" stroke-linejoin="round"/>
<polyline points="433.4,479.4 437.2,483.2" fill="none" stroke="#6e64e8" stroke-width="0.6" stroke-linejoin="round"/>
<polyline points="434.0,500.4 443.7,495.0" fill="none" stroke="#6e64e8" stroke-width="0.6" stroke-linejoin="round"/>
<polyline points="436.1,505.9 445.8,500.5" fill="none" stroke="#6e64e8" stroke-width="0.6" stroke-linejoin="round"/>
<polyline points="434.0,500.4 436.1,505.9" fill="none" stroke="#6e64e8" stroke-width="0.6" stroke-linejoin="round"/>
<polyline points="443.7,495.0 445.8,500.5" fill="none" stroke="#6e64e8" stroke-width="0.6" stroke-linejoin="round"/>
<polyline points="441.4,488.9 452.1,482.9" fill="none" stroke="#6e64e8" stroke-width="0.6" stroke-linejoin="round"/>
<polyline points="444.1,493.9 454.9,487.9" fill="none" stroke="#6e64e8" stroke-width="0.6" stroke-linejoin="round"/>
<polyline points="441.4,488.9 444.1,493.9" fill="none" stroke="#6e64e8" stroke-width="0.6" stroke-linejoin="round"/>
<polyline points="438.0,513.2 447.6,507.8" fill="none" stroke="#6e64e8" stroke-width="0.6" stroke-linejoin="round"/>
<polyline points="438.7,519.2 448.3,513.8" fill="none" stroke="#6e64e8" stroke-width="0.6" stroke-linejoin="round"/>
<polyline points="438.0,513.2 438.7,519.2" fill="none" stroke="#6e64e8" stroke-width="0.6" stroke-linejoin="round"/>
<polyline points="447.6,507.8 448.3,513.8" fill="none" stroke="#6e64e8" stroke-width="0.6" stroke-linejoin="round"/>
<polyline points="446.8,500.8 457.5,494.8" fill="none" stroke="#6e64e8" stroke-width="0.6" stroke-linejoin="round"/>
<polyline points="448.2,506.5 459.0,500.5" fill="none" stroke="#6e64e8" stroke-width="0.6" stroke-linejoin="round"/>
<polyline points="446.8,500.8 448.2,506.5" fill="none" stroke="#6e64e8" stroke-width="0.6" stroke-linejoin="round"/>
<ellipse cx="401.8" cy="521.5" rx="22.3" ry="27.1" fill="none" stroke="#6e64e8" stroke-width="0.7" transform="rotate(-4 401.3 521.5)"/>
<ellipse cx="404.3" cy="519.8" rx="15.1" ry="18.4" fill="#fff" stroke="#222" stroke-width="0.8" transform="rotate(-4 404.3 519.8)"/>
<ellipse cx="412.5" cy="523.5" rx="4.5" ry="3.7" fill="#fff" stroke="#333" stroke-width="0.7" transform="rotate(110 412.5 523.5)"/>
<ellipse cx="404.0" cy="530.5" rx="4.5" ry="3.7" fill="#fff" stroke="#333" stroke-width="0.7" transform="rotate(182 404.0 530.5)"/>
<ellipse cx="395.9" cy="522.7" rx="4.5" ry="3.7" fill="#fff" stroke="#333" stroke-width="0.7" transform="rotate(254 395.9 522.7)"/>
<ellipse cx="399.4" cy="511.0" rx="4.5" ry="3.7" fill="#fff" stroke="#333" stroke-width="0.7" transform="rotate(326 399.4 511.0)"/>
<ellipse cx="409.7" cy="511.4" rx="4.5" ry="3.7" fill="#fff" stroke="#333" stroke-width="0.7" transform="rotate(398 409.7 511.4)"/>
<polyline points="433.7,490.0 433.7,555.7" fill="none" stroke="#6a5ee6" stroke-width="1.3" stroke-linejoin="round"/>
<polyline points="432.3,560.0 432.3,582.2" fill="none" stroke="#6a5ee6" stroke-width="1.3" stroke-linejoin="round"/>
<polyline points="410.0,474.0 433.7,487.0 452.8,479.0" fill="none" stroke="#6a5ee6" stroke-width="1.3" stroke-linejoin="round"/>
<g stroke-linecap="butt" fill="none">
<path d="M28.3 595.3V580M28.3 595.3Q35 594.5 38 592.5M28.3 595.3Q22 595 18.5 592.8" stroke="#000" stroke-width="1"/>
<path d="M26 584.5h4.9l-2.5-7.4z" fill="#0000dc" stroke="none"/>
<path d="M35.2 590.6h4.2l1.6 1.9l-1.6 2.2h-4.2z" fill="#d00000" stroke="none"/><path d="M36.5 592.6h3" stroke="#500" stroke-width=".8"/>
<path d="M15.2 590.3l5.2-.2l1.4 2.2l-3 3.3l-1.6-2.6z" fill="#00c800" stroke="none"/><path d="M17.5 592.4h3" stroke="#050" stroke-width=".8"/>
<path d="M24.4 565.2h8l-8 10.2h8.4" stroke="#000" stroke-width="1.4"/>
<path d="M6.3 582.6l4.6 5.6l4.6-5.6M10.9 588.2v5.4" stroke="#000" stroke-width="1.4"/>
<path d="M42.6 582.6l8.8 10.8M51.4 582.6l-8.8 10.8" stroke="#000" stroke-width="1.4"/>
</g>
</svg>
<div class="abs" style="left:3px;top:144px;width:732px;height:482px;box-sizing:border-box;border:1px solid #f00"></div>
<!-- timeline dock -->
<div class="abs" style="left:743px;top:121px;width:223px;height:18px;box-sizing:border-box;background:#d9d9d9;border:1px solid #b9b9b9"></div>
<svg class="abs" style="left:937px;top:123px" width="28" height="14" viewBox="0 0 28 14"><path d="M1.5 4.5h5v5h-5zM3.5 4.5v-2h5v5h-2" fill="none" stroke="#000" stroke-width="1.2"/><path d="M17.5 2.5l8 8M25.5 2.5l-8 8" stroke="#000" stroke-width="1.5"/></svg>
<div class="abs" style="left:743px;top:141px;width:223px;height:463px;box-sizing:border-box;background:#fff;border:1px solid #828790"></div>
<div class="abs" style="left:949px;top:142px;width:16px;height:461px;background:#f0f0f0"></div>
<div class="abs" style="left:950px;top:397px;width:15px;height:188px;background:#cdcdcd"></div>
<svg class="abs" style="left:949px;top:142px" width="16" height="461" viewBox="0 0 16 461"><path d="M4 11l4-4 4 4M4 450l4 4 4-4" fill="none" stroke="#505050" stroke-width="1.6"/></svg>
<svg class="abs" style="left:748px;top:147.0px" width="11" height="8" viewBox="0 0 11 8"><path d="M1.5 1.5L5.5 5.5L9.5 1.5" fill="none" stroke="#404040" stroke-width="1.4"/></svg><div class="abs dot" style="left:787px;top:194.5px;background:#aee9ef"></div><svg class="abs" style="left:748px;top:215.0px" width="11" height="8" viewBox="0 0 11 8"><path d="M1.5 1.5L5.5 5.5L9.5 1.5" fill="none" stroke="#404040" stroke-width="1.4"/></svg><div class="abs dot" style="left:787px;top:228.5px;background:#c91a09"></div><div class="abs dot" style="left:787px;top:245.5px;background:#c91a09"></div><svg class="abs" style="left:748px;top:266.0px" width="11" height="8" viewBox="0 0 11 8"><path d="M1.5 1.5L5.5 5.5L9.5 1.5" fill="none" stroke="#404040" stroke-width="1.4"/></svg><div class="abs dot" style="left:787px;top:279.5px;background:#c91a09"></div><div class="abs dot" style="left:787px;top:296.5px;background:#c91a09"></div><svg class="abs" style="left:748px;top:317.0px" width="11" height="8" viewBox="0 0 11 8"><path d="M1.5 1.5L5.5 5.5L9.5 1.5" fill="none" stroke="#404040" stroke-width="1.4"/></svg><div class="abs dot" style="left:787px;top:330.5px;background:#9ba19d"></div><div class="abs dot" style="left:787px;top:347.5px;background:#05131d"></div><div class="abs dot" style="left:787px;top:364.5px;background:#9ba19d"></div><div class="abs dot" style="left:787px;top:381.5px;background:#05131d"></div><div class="abs dot" style="left:787px;top:398.5px;background:#f2cd37"></div><div class="abs dot" style="left:787px;top:415.5px;background:#f2cd37"></div><div class="abs dot" style="left:787px;top:449.5px;background:#212121"></div><div class="abs dot" style="left:787px;top:483.5px;background:#212121"></div><div class="abs sel" style="left:786px;top:516.5px;width:161px;height:17px"></div><div class="abs dot" style="left:787px;top:517.5px;background:#27425f"></div><div class="abs dot" style="left:787px;top:551.5px;background:#212121"></div><svg class="abs" style="left:748px;top:572.0px" width="11" height="8" viewBox="0 0 11 8"><path d="M1.5 1.5L5.5 5.5L9.5 1.5" fill="none" stroke="#404040" stroke-width="1.4"/></svg><div class="abs dot" style="left:787px;top:585.5px;background:#7f7f7f"></div>
<!-- dock tabs -->
<div class="abs" style="left:745px;top:604px;width:48px;height:19px;box-sizing:border-box;border:1px solid #d9d9d9;border-top:0;background:#f0f0f0"></div>
<div class="abs" style="left:792px;top:604px;width:72px;height:19px;box-sizing:border-box;border:1px solid #d9d9d9;border-top:0;background:#f0f0f0"></div>
<div class="abs" style="left:863px;top:604px;width:64px;height:21px;box-sizing:border-box;border:1px solid #d9d9d9;border-top:0;background:#fff"></div>
<!-- status bar -->
<div class="vline" style="left:197px;top:628px;height:15px;background:#c0c0c0"></div>
<div class="vline" style="left:812px;top:628px;height:15px;background:#d7d7d7"></div>
<div class="vline" style="left:904px;top:628px;height:15px;background:#d7d7d7"></div>
<div class="vline" style="left:948px;top:628px;height:15px;background:#d7d7d7"></div>
<svg class="abs" style="left:955px;top:633px" width="11" height="11" viewBox="0 0 11 11"><path d="M8 0h2v2h-2zM8 4h2v2h-2zM8 8h2v2h-2zM4 4h2v2h-2zM4 8h2v2h-2zM0 8h2v2h-2z" fill="#bfbfbf"/></svg>
<span class="t" style="left:30.4px;top:7.6px;color:#fff;transform:scaleX(0.9916)">6660 - Hook &amp; Haul Wrecker.mpd* - LeoCAD</span><span class="t" style="left:9.5px;top:33.6px;color:#000;transform:scaleX(0.8995)">File</span><span class="t" style="left:43.4px;top:33.6px;color:#000;transform:scaleX(0.9474)">Edit</span><span class="t" style="left:79.5px;top:33.6px;color:#000;transform:scaleX(0.9497)">View</span><span class="t" style="left:120.6px;top:33.6px;color:#000;transform:scaleX(0.9257)">Piece</span><span class="t" style="left:164.3px;top:33.6px;color:#000;transform:scaleX(1.0310)">Model</span><span class="t" style="left:214.0px;top:33.6px;color:#000;transform:scaleX(1.0127)">Help</span><span class="t" style="left:12.8px;top:124.1px;color:#000;transform:scaleX(0.8904)">6660 Hook  Haul Wrecker.ldr</span><span class="t" style="left:747.8px;top:123.6px;color:#000;transform:scaleX(0.8284)">Timeline</span><span class="t" style="left:767.5px;top:143.8px;color:#000;transform:scaleX(0.8991)">Step 7</span><span class="t" style="left:809.5px;top:160.8px;color:#000;transform:scaleX(0.9597)">Hinge Car Roof Holder  ...</span><span class="t" style="left:809.5px;top:177.8px;color:#000;transform:scaleX(0.9232)">Hinge Car Roof  4 x  4 S...</span><span class="t" style="left:809.5px;top:194.8px;color:#000;transform:scaleX(0.9373)">Glass for Hinge Car Roo...</span><span class="t" style="left:767.5px;top:211.8px;color:#000;transform:scaleX(0.8991)">Step 8</span><span class="t" style="left:809.5px;top:228.8px;color:#000;transform:scaleX(0.9073)">Plate  1 x  2</span><span class="t" style="left:809.5px;top:245.8px;color:#000;transform:scaleX(0.9073)">Plate  1 x  2</span><span class="t" style="left:767.5px;top:262.8px;color:#000;transform:scaleX(0.8991)">Step 9</span><span class="t" style="left:809.5px;top:279.8px;color:#000;transform:scaleX(0.9371)">Car Wheel Holder  2 x  2...</span><span class="t" style="left:809.5px;top:296.8px;color:#000;transform:scaleX(0.9371)">Car Wheel Holder  2 x  2...</span><span class="t" style="left:767.5px;top:313.8px;color:#000;transform:scaleX(0.8725)">Step 10</span><span class="t" style="left:809.5px;top:330.8px;color:#000;transform:scaleX(0.9632)">Hinge Control Stick Base</span><span class="t" style="left:809.5px;top:347.8px;color:#000;transform:scaleX(0.9881)">Hinge Control Stick</span><span class="t" style="left:809.5px;top:364.8px;color:#000;transform:scaleX(0.9632)">Hinge Control Stick Base</span><span class="t" style="left:809.5px;top:381.8px;color:#000;transform:scaleX(0.9881)">Hinge Control Stick</span><span class="t" style="left:809.5px;top:398.8px;color:#000;transform:scaleX(0.9756)">~Moved to 6141</span><span class="t" style="left:809.5px;top:415.8px;color:#000;transform:scaleX(0.9756)">~Moved to 6141</span><span class="t" style="left:809.5px;top:432.8px;color:#000;transform:scaleX(0.9312)">Wheel Rim  6.4 x  8</span><span class="t" style="left:809.5px;top:449.8px;color:#000;transform:scaleX(0.9453)">Tyre  8/ 75 x  8 Offset Tr...</span><span class="t" style="left:809.5px;top:466.8px;color:#000;transform:scaleX(0.9312)">Wheel Rim  6.4 x  8</span><span class="t" style="left:809.5px;top:483.8px;color:#000;transform:scaleX(0.9453)">Tyre  8/ 75 x  8 Offset Tr...</span><span class="t" style="left:809.5px;top:500.8px;color:#000;transform:scaleX(0.9312)">Wheel Rim  6.4 x  8</span><span class="t" style="left:809.5px;top:517.8px;color:#000;transform:scaleX(0.9453)">Tyre  8/ 75 x  8 Offset Tr...</span><span class="t" style="left:809.5px;top:534.8px;color:#000;transform:scaleX(0.9312)">Wheel Rim  6.4 x  8</span><span class="t" style="left:809.5px;top:551.8px;color:#000;transform:scaleX(0.9453)">Tyre  8/ 75 x  8 Offset Tr...</span><span class="t" style="left:767.5px;top:568.8px;color:#000;transform:scaleX(0.8769)">Step 11</span><span class="t" style="left:809.5px;top:585.8px;color:#000;transform:scaleX(0.9692)">Trucker.ldr</span><span class="t" style="left:754.0px;top:607.1px;color:#000;transform:scaleX(0.9031)">Parts</span><span class="t" style="left:803.0px;top:607.1px;color:#000;transform:scaleX(0.8994)">Properties</span><span class="t" style="left:876.3px;top:607.6px;color:#000;transform:scaleX(0.8395)">Timeline</span><span class="t" style="left:4.0px;top:628.2px;color:#000;transform:scaleX(0.9307)">Tyre  8/ 75 x  8 Offset Tread (ID: 4084)</span><span class="t" style="left:673.0px;top:628.2px;color:#000;transform:scaleX(0.9170)">X: -40.00 Y: -60.00 Z: 19.00</span><span class="t" style="left:817.2px;top:628.2px;color:#000;transform:scaleX(0.9107)">M: 1/2S 1F R: 30</span><span class="t" style="left:909.2px;top:628.2px;color:#000;transform:scaleX(0.8843)">Step 11</span>
<svg class="abs" style="left:8px;top:5px" width="18" height="19" viewBox="8 5 18 19"><path d="M10 9.4L16.1 7.4L23.7 8.4L17.1 11.7z" fill="#b82222"/><path d="M10 9.4L17.1 11.7V21.9L11 18.5z" fill="#e82626"/><path d="M17.1 11.7L23.7 8.4L23.1 18.1L17.1 21.9z" fill="#7e2020"/><ellipse cx="16.9" cy="8.6" rx="2.8" ry="1.7" fill="#a81e1e"/><ellipse cx="16.9" cy="7.5" rx="2.8" ry="1.7" fill="#c42a2a"/></svg>
<!-- window caption buttons -->
<svg class="abs" style="left:830px;top:0" width="138" height="30" viewBox="830 0 138 30"><path d="M850 15.5h10M893.5 9.5h10v10h-10zM940 10l10 10M950 10l-10 10" fill="none" stroke="#fff" stroke-width="1.1"/></svg>
<!-- window border -->
<div class="abs" style="left:0;top:30px;width:1px;height:616px;background:#5d5855"></div>
<div class="abs" style="left:967px;top:30px;width:1px;height:616px;background:#5d5855"></div>
<div class="abs" style="left:0;top:645px;width:968px;height:1px;background:#5d5855"></div>
</div></body></html>
